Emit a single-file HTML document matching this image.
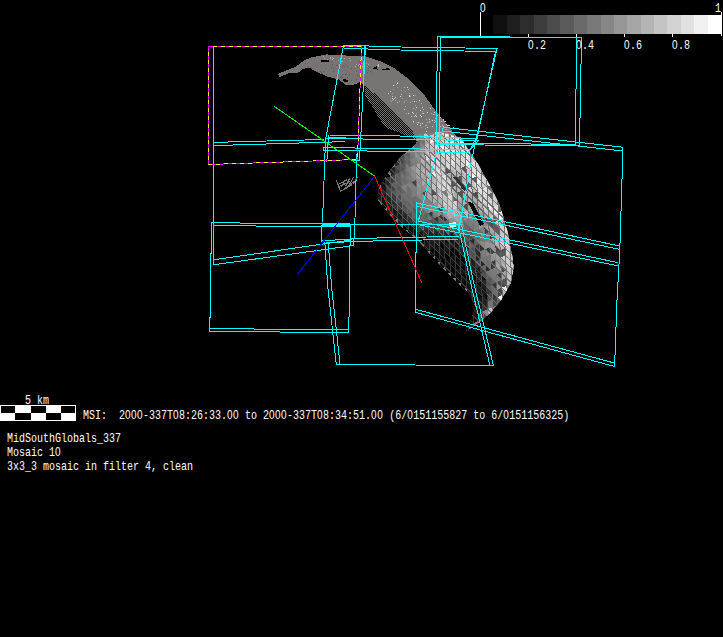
<!DOCTYPE html>
<html><head><meta charset="utf-8"><title>MSI mosaic</title>
<style>
html,body{margin:0;padding:0;background:#000;}
body{width:723px;height:637px;overflow:hidden;position:relative;}
svg{position:absolute;left:0;top:0;}
.t{position:absolute;color:#fff;font-family:"Liberation Mono",monospace;font-size:13.5px;line-height:13px;height:13px;white-space:pre;transform:scaleX(0.7407);transform-origin:0 0;}
.z{font-family:"Liberation Sans",sans-serif;letter-spacing:0.044em;line-height:0;}
</style></head><body>
<svg width="723" height="637" viewBox="0 0 723 637">
<defs>
<pattern id="dither" width="2" height="2" patternUnits="userSpaceOnUse"><rect x="0" y="0" width="1" height="1" fill="#787474"/><rect x="1" y="1" width="1" height="1" fill="#787474"/></pattern>
<clipPath id="arcclip"><polygon points="277.6,74 286,70.5 295,67 304.6,60.2 311,57.5 318.4,56 326.7,54.4 339,55.2 353,55.8 365,56 380,61.2 395,68.7 410,80 425,96 435,110 445,122.4 456,136 467,150 455,160 440,165 425,165 410,157 420,150 419,136 416,136 409.5,127.6 398.4,116.5 390,108.2 377.7,95.7 370,90 365,86 360,82.3 353,85 346,85 339,79.6 328,76.8 318.4,72.7 308.7,67.5 303,69 297,73.5 290.7,72.5 279.7,77"/></clipPath>
<clipPath id="bodyclip"><polygon points="417.4,142.5 414,135 440,132 462,138 467.3,148 477.3,162.5 489.8,185 499.8,205 507.3,230 512.3,254.8 514,268 510.6,284 501.7,299.6 490.6,313 480,322 470,329 464,334 468,326 473,314 475,306 468.5,293 457.4,283 447.4,273 432.4,257 417.4,240 402.4,228 387.5,212.4 377.5,200 378.7,187.4 390,170 400,157.5"/></clipPath>
</defs>
<g shape-rendering="crispEdges">
<polygon points="277.6,74 286,70.5 295,67 304.6,60.2 311,57.5 318.4,56 326.7,54.4 339,55.2 353,55.8 365,56 380,61.2 395,68.7 410,80 425,96 435,110 445,122.4 456,136 467,150 455,160 440,165 425,165 410,157 420,150 419,136 416,136 409.5,127.6 398.4,116.5 390,108.2 377.7,95.7 370,90 365,86 360,82.3 353,85 346,85 339,79.6 328,76.8 318.4,72.7 308.7,67.5 303,69 297,73.5 290.7,72.5 279.7,77" fill="#787474"/>
<polygon points="365,86 365,95.7 373.5,108.2 377.7,116.5 386,127.6 400,133 411,137 415,140 420,150 419,136 416,136 409.5,127.6 398.4,116.5 390,108.2 377.7,95.7 370,90" fill="url(#dither)"/>
<polygon points="321,60 329,60 329,62 321,62" fill="#000"/>
<polygon points="343,79 348,80 348,82 344,82" fill="#000"/>
<polygon points="372,69 377,66 377.5,69.5" fill="#000"/>
<polygon points="382,69.5 389,67.5 390,70" fill="#000"/>
<polygon points="376,66 379,64 379,67" fill="#b8b8b8"/>
<g clip-path="url(#arcclip)"><rect x="333" y="58" width="1" height="1" fill="#a8a8a8"/><rect x="332" y="57" width="1" height="1" fill="#a8a8a8"/><rect x="332" y="57" width="1" height="1" fill="#a8a8a8"/><rect x="324" y="58" width="1" height="1" fill="#a8a8a8"/><rect x="332" y="59" width="1" height="1" fill="#a8a8a8"/><rect x="323" y="56" width="1" height="1" fill="#a8a8a8"/><rect x="330" y="57" width="1" height="1" fill="#a8a8a8"/><rect x="327" y="59" width="1" height="1" fill="#a8a8a8"/><rect x="330" y="58" width="1" height="1" fill="#a8a8a8"/><rect x="332" y="57" width="1" height="1" fill="#a8a8a8"/><rect x="362" y="66" width="1" height="1" fill="#a8a8a8"/><rect x="359" y="64" width="1" height="1" fill="#a8a8a8"/><rect x="366" y="63" width="1" height="1" fill="#a8a8a8"/><rect x="356" y="64" width="1" height="1" fill="#a8a8a8"/><rect x="367" y="66" width="1" height="1" fill="#a8a8a8"/><rect x="360" y="63" width="1" height="1" fill="#a8a8a8"/><rect x="359" y="65" width="1" height="1" fill="#a8a8a8"/><rect x="361" y="63" width="1" height="1" fill="#a8a8a8"/><rect x="368" y="64" width="1" height="1" fill="#a8a8a8"/><rect x="355" y="66" width="1" height="1" fill="#a8a8a8"/><rect x="363" y="65" width="1" height="1" fill="#a8a8a8"/><rect x="358" y="65" width="1" height="1" fill="#a8a8a8"/><rect x="350" y="60" width="1" height="1" fill="#a8a8a8"/><rect x="342" y="61" width="1" height="1" fill="#a8a8a8"/><rect x="344" y="58" width="1" height="1" fill="#a8a8a8"/><rect x="341" y="61" width="1" height="1" fill="#a8a8a8"/><rect x="349" y="58" width="1" height="1" fill="#a8a8a8"/><rect x="338" y="60" width="1" height="1" fill="#a8a8a8"/><rect x="337" y="65" width="1" height="1" fill="#5a5858"/><rect x="343" y="65" width="1" height="1" fill="#5a5858"/><rect x="336" y="65" width="1" height="1" fill="#5a5858"/><rect x="311" y="68" width="1" height="1" fill="#5a5858"/><rect x="336" y="75" width="1" height="1" fill="#5a5858"/><rect x="342" y="74" width="1" height="1" fill="#5a5858"/><rect x="308" y="66" width="1" height="1" fill="#5a5858"/><rect x="325" y="68" width="1" height="1" fill="#5a5858"/><rect x="334" y="78" width="1" height="1" fill="#5a5858"/><rect x="310" y="67" width="1" height="1" fill="#5a5858"/><rect x="312" y="70" width="1" height="1" fill="#5a5858"/><rect x="323" y="71" width="1" height="1" fill="#5a5858"/><rect x="301" y="76" width="1" height="1" fill="#5a5858"/><rect x="326" y="74" width="1" height="1" fill="#5a5858"/><rect x="320" y="71" width="1" height="1" fill="#5a5858"/><rect x="340" y="77" width="1" height="1" fill="#5a5858"/><rect x="333" y="71" width="1" height="1" fill="#5a5858"/><rect x="342" y="77" width="1" height="1" fill="#5a5858"/><rect x="301" y="68" width="1" height="1" fill="#5a5858"/><rect x="340" y="62" width="1" height="1" fill="#5a5858"/><rect x="306" y="69" width="1" height="1" fill="#5a5858"/><rect x="331" y="67" width="1" height="1" fill="#5a5858"/><rect x="333" y="76" width="1" height="1" fill="#5a5858"/><rect x="312" y="68" width="1" height="1" fill="#5a5858"/><rect x="333" y="68" width="1" height="1" fill="#5a5858"/><rect x="302" y="78" width="1" height="1" fill="#5a5858"/><rect x="341" y="76" width="1" height="1" fill="#5a5858"/><rect x="307" y="71" width="1" height="1" fill="#5a5858"/><rect x="342" y="66" width="1" height="1" fill="#5a5858"/><rect x="308" y="76" width="1" height="1" fill="#5a5858"/><rect x="305" y="63" width="1" height="1" fill="#5a5858"/><rect x="301" y="73" width="1" height="1" fill="#5a5858"/><rect x="339" y="69" width="1" height="1" fill="#5a5858"/><rect x="332" y="64" width="1" height="1" fill="#5a5858"/><rect x="331" y="62" width="1" height="1" fill="#5a5858"/><rect x="321" y="72" width="1" height="1" fill="#5a5858"/><rect x="321" y="73" width="1" height="1" fill="#5a5858"/><rect x="344" y="66" width="1" height="1" fill="#5a5858"/><rect x="305" y="63" width="1" height="1" fill="#5a5858"/><rect x="345" y="64" width="1" height="1" fill="#5a5858"/><rect x="368" y="70" width="1" height="1" fill="#5a5858"/><rect x="370" y="66" width="1" height="1" fill="#5a5858"/><rect x="347" y="66" width="1" height="1" fill="#5a5858"/><rect x="358" y="82" width="1" height="1" fill="#5a5858"/><rect x="369" y="67" width="1" height="1" fill="#5a5858"/><rect x="360" y="70" width="1" height="1" fill="#5a5858"/><rect x="348" y="85" width="1" height="1" fill="#5a5858"/><rect x="346" y="73" width="1" height="1" fill="#5a5858"/><rect x="347" y="66" width="1" height="1" fill="#5a5858"/><rect x="367" y="65" width="1" height="1" fill="#5a5858"/><rect x="357" y="75" width="1" height="1" fill="#5a5858"/><rect x="360" y="82" width="1" height="1" fill="#5a5858"/><rect x="347" y="77" width="1" height="1" fill="#5a5858"/><rect x="372" y="73" width="1" height="1" fill="#5a5858"/><rect x="351" y="80" width="1" height="1" fill="#5a5858"/><rect x="360" y="69" width="1" height="1" fill="#5a5858"/><rect x="345" y="74" width="1" height="1" fill="#5a5858"/><rect x="359" y="84" width="1" height="1" fill="#5a5858"/><rect x="367" y="72" width="1" height="1" fill="#5a5858"/><rect x="359" y="65" width="1" height="1" fill="#5a5858"/><rect x="359" y="61" width="1" height="1" fill="#5a5858"/><rect x="368" y="68" width="1" height="1" fill="#5a5858"/><rect x="356" y="71" width="1" height="1" fill="#5a5858"/><rect x="359" y="76" width="1" height="1" fill="#5a5858"/><rect x="356" y="79" width="1" height="1" fill="#5a5858"/><rect x="357" y="67" width="1" height="1" fill="#5a5858"/><rect x="345" y="85" width="1" height="1" fill="#5a5858"/><rect x="351" y="68" width="1" height="1" fill="#5a5858"/><rect x="370" y="71" width="1" height="1" fill="#5a5858"/><rect x="349" y="74" width="1" height="1" fill="#5a5858"/></g>
<rect x="404" y="101" width="1" height="1" fill="#a0a0a0"/><rect x="444" y="133" width="1" height="1" fill="#b0b0b0"/><rect x="420" y="125" width="1" height="1" fill="#dcdcdc"/><rect x="409" y="96" width="1" height="1" fill="#dcdcdc"/><rect x="421" y="116" width="1" height="1" fill="#dcdcdc"/><rect x="433" y="114" width="1" height="1" fill="#c8c8c8"/><rect x="441" y="132" width="1" height="1" fill="#b0b0b0"/><rect x="436" y="114" width="1" height="1" fill="#b0b0b0"/><rect x="415" y="95" width="1" height="1" fill="#a0a0a0"/><rect x="415" y="115" width="1" height="1" fill="#dcdcdc"/><rect x="426" y="131" width="1" height="1" fill="#dcdcdc"/><rect x="432" y="126" width="1" height="1" fill="#c8c8c8"/><rect x="447" y="125" width="1" height="1" fill="#c8c8c8"/><rect x="423" y="109" width="1" height="1" fill="#dcdcdc"/><rect x="431" y="133" width="1" height="1" fill="#dcdcdc"/><rect x="422" y="111" width="1" height="1" fill="#a0a0a0"/><rect x="423" y="113" width="1" height="1" fill="#c8c8c8"/><rect x="441" y="136" width="1" height="1" fill="#b0b0b0"/><rect x="434" y="139" width="1" height="1" fill="#c8c8c8"/><rect x="434" y="120" width="1" height="1" fill="#b0b0b0"/><rect x="436" y="119" width="1" height="1" fill="#a0a0a0"/><rect x="413" y="95" width="1" height="1" fill="#dcdcdc"/><rect x="392" y="98" width="1" height="1" fill="#dcdcdc"/><rect x="449" y="125" width="1" height="1" fill="#dcdcdc"/><rect x="430" y="133" width="1" height="1" fill="#b0b0b0"/><rect x="422" y="123" width="1" height="1" fill="#dcdcdc"/><rect x="435" y="121" width="1" height="1" fill="#a0a0a0"/><rect x="413" y="122" width="1" height="1" fill="#a0a0a0"/><rect x="397" y="82" width="1" height="1" fill="#b0b0b0"/><rect x="439" y="143" width="1" height="1" fill="#a0a0a0"/><rect x="431" y="113" width="1" height="1" fill="#b0b0b0"/><rect x="450" y="134" width="1" height="1" fill="#a0a0a0"/><rect x="441" y="143" width="1" height="1" fill="#dcdcdc"/><rect x="408" y="113" width="1" height="1" fill="#dcdcdc"/><rect x="427" y="122" width="1" height="1" fill="#b0b0b0"/><rect x="421" y="127" width="1" height="1" fill="#a0a0a0"/><rect x="413" y="113" width="1" height="1" fill="#c8c8c8"/><rect x="446" y="134" width="1" height="1" fill="#a0a0a0"/><rect x="420" y="115" width="1" height="1" fill="#b0b0b0"/><rect x="430" y="136" width="1" height="1" fill="#a0a0a0"/><rect x="390" y="91" width="1" height="1" fill="#c8c8c8"/><rect x="392" y="93" width="1" height="1" fill="#dcdcdc"/><rect x="406" y="113" width="1" height="1" fill="#a0a0a0"/><rect x="440" y="117" width="1" height="1" fill="#b0b0b0"/><rect x="453" y="127" width="1" height="1" fill="#a0a0a0"/><rect x="406" y="100" width="1" height="1" fill="#a0a0a0"/><rect x="405" y="91" width="1" height="1" fill="#a0a0a0"/><rect x="443" y="126" width="1" height="1" fill="#dcdcdc"/><rect x="393" y="99" width="1" height="1" fill="#c8c8c8"/><rect x="413" y="99" width="1" height="1" fill="#a0a0a0"/><rect x="409" y="95" width="1" height="1" fill="#dcdcdc"/><rect x="434" y="114" width="1" height="1" fill="#a0a0a0"/><rect x="443" y="138" width="1" height="1" fill="#c8c8c8"/><rect x="411" y="116" width="1" height="1" fill="#c8c8c8"/><rect x="392" y="96" width="1" height="1" fill="#c8c8c8"/><rect x="443" y="131" width="1" height="1" fill="#c8c8c8"/><rect x="443" y="119" width="1" height="1" fill="#c8c8c8"/><rect x="404" y="109" width="1" height="1" fill="#c8c8c8"/><rect x="443" y="128" width="1" height="1" fill="#b0b0b0"/><rect x="440" y="126" width="1" height="1" fill="#c8c8c8"/><rect x="415" y="109" width="1" height="1" fill="#a0a0a0"/><rect x="416" y="113" width="1" height="1" fill="#a0a0a0"/><rect x="416" y="107" width="1" height="1" fill="#dcdcdc"/><rect x="407" y="87" width="1" height="1" fill="#dcdcdc"/><rect x="417" y="124" width="1" height="1" fill="#c8c8c8"/><rect x="393" y="89" width="1" height="1" fill="#a0a0a0"/><rect x="417" y="122" width="1" height="1" fill="#b0b0b0"/><rect x="434" y="139" width="1" height="1" fill="#b0b0b0"/><rect x="444" y="121" width="1" height="1" fill="#c8c8c8"/><rect x="437" y="140" width="1" height="1" fill="#b0b0b0"/><rect x="388" y="93" width="1" height="1" fill="#c8c8c8"/><rect x="423" y="109" width="1" height="1" fill="#b0b0b0"/><rect x="422" y="113" width="1" height="1" fill="#b0b0b0"/><rect x="414" y="101" width="1" height="1" fill="#dcdcdc"/><rect x="444" y="121" width="1" height="1" fill="#c8c8c8"/><rect x="402" y="98" width="1" height="1" fill="#b0b0b0"/><rect x="397" y="102" width="1" height="1" fill="#c8c8c8"/><rect x="445" y="121" width="1" height="1" fill="#dcdcdc"/><rect x="397" y="87" width="1" height="1" fill="#a0a0a0"/><rect x="426" y="119" width="1" height="1" fill="#b0b0b0"/><rect x="414" y="116" width="1" height="1" fill="#b0b0b0"/><rect x="437" y="136" width="1" height="1" fill="#b0b0b0"/><rect x="404" y="87" width="1" height="1" fill="#b0b0b0"/><rect x="446" y="124" width="1" height="1" fill="#dcdcdc"/><rect x="412" y="101" width="1" height="1" fill="#a0a0a0"/><rect x="415" y="105" width="1" height="1" fill="#a0a0a0"/><rect x="416" y="101" width="1" height="1" fill="#a0a0a0"/><rect x="421" y="103" width="1" height="1" fill="#b0b0b0"/><rect x="434" y="122" width="1" height="1" fill="#b0b0b0"/><rect x="430" y="108" width="1" height="1" fill="#dcdcdc"/><rect x="422" y="123" width="1" height="1" fill="#dcdcdc"/><rect x="434" y="112" width="1" height="1" fill="#dcdcdc"/><rect x="392" y="93" width="1" height="1" fill="#a0a0a0"/><rect x="412" y="112" width="1" height="1" fill="#dcdcdc"/><rect x="396" y="84" width="1" height="1" fill="#a0a0a0"/><rect x="437" y="115" width="1" height="1" fill="#dcdcdc"/><rect x="409" y="93" width="1" height="1" fill="#b0b0b0"/><rect x="447" y="133" width="1" height="1" fill="#a0a0a0"/><rect x="395" y="97" width="1" height="1" fill="#dcdcdc"/><rect x="426" y="125" width="1" height="1" fill="#b0b0b0"/><rect x="435" y="132" width="1" height="1" fill="#dcdcdc"/><rect x="395" y="100" width="1" height="1" fill="#b0b0b0"/><rect x="420" y="115" width="1" height="1" fill="#dcdcdc"/><rect x="408" y="89" width="1" height="1" fill="#b0b0b0"/><rect x="397" y="83" width="1" height="1" fill="#dcdcdc"/><rect x="433" y="138" width="1" height="1" fill="#a0a0a0"/><rect x="443" y="120" width="1" height="1" fill="#c8c8c8"/><rect x="394" y="98" width="1" height="1" fill="#b0b0b0"/><rect x="418" y="122" width="1" height="1" fill="#c8c8c8"/><rect x="442" y="125" width="1" height="1" fill="#c8c8c8"/><rect x="429" y="119" width="1" height="1" fill="#dcdcdc"/><rect x="404" y="102" width="1" height="1" fill="#a0a0a0"/><rect x="417" y="124" width="1" height="1" fill="#dcdcdc"/><rect x="413" y="121" width="1" height="1" fill="#dcdcdc"/><rect x="433" y="138" width="1" height="1" fill="#dcdcdc"/><rect x="427" y="127" width="1" height="1" fill="#dcdcdc"/><rect x="401" y="94" width="1" height="1" fill="#c8c8c8"/><rect x="400" y="96" width="1" height="1" fill="#dcdcdc"/><rect x="444" y="134" width="1" height="1" fill="#dcdcdc"/><rect x="420" y="123" width="1" height="1" fill="#c8c8c8"/><rect x="410" y="96" width="1" height="1" fill="#a0a0a0"/><rect x="440" y="141" width="1" height="1" fill="#a0a0a0"/><rect x="425" y="128" width="1" height="1" fill="#a0a0a0"/><rect x="445" y="129" width="1" height="1" fill="#a0a0a0"/><rect x="420" y="110" width="1" height="1" fill="#c8c8c8"/><rect x="427" y="112" width="1" height="1" fill="#dcdcdc"/><rect x="441" y="121" width="1" height="1" fill="#dcdcdc"/><rect x="435" y="118" width="1" height="1" fill="#b0b0b0"/><rect x="416" y="116" width="1" height="1" fill="#dcdcdc"/><rect x="431" y="134" width="1" height="1" fill="#b0b0b0"/><rect x="422" y="107" width="1" height="1" fill="#c8c8c8"/><rect x="425" y="125" width="1" height="1" fill="#b0b0b0"/><rect x="442" y="142" width="1" height="1" fill="#c8c8c8"/><rect x="439" y="137" width="1" height="1" fill="#c8c8c8"/><rect x="399" y="101" width="1" height="1" fill="#b0b0b0"/><rect x="446" y="129" width="1" height="1" fill="#b0b0b0"/><rect x="410" y="102" width="1" height="1" fill="#b0b0b0"/><rect x="401" y="90" width="1" height="1" fill="#a0a0a0"/><rect x="393" y="89" width="1" height="1" fill="#a0a0a0"/><rect x="393" y="85" width="1" height="1" fill="#dcdcdc"/><rect x="419" y="100" width="1" height="1" fill="#dcdcdc"/><rect x="413" y="108" width="1" height="1" fill="#b0b0b0"/><rect x="448" y="125" width="1" height="1" fill="#dcdcdc"/><rect x="392" y="100" width="1" height="1" fill="#a0a0a0"/><rect x="390" y="100" width="1" height="1" fill="#a0a0a0"/><rect x="432" y="120" width="1" height="1" fill="#dcdcdc"/><rect x="405" y="106" width="1" height="1" fill="#a0a0a0"/><rect x="391" y="101" width="1" height="1" fill="#a0a0a0"/><rect x="429" y="122" width="1" height="1" fill="#b0b0b0"/><rect x="429" y="121" width="1" height="1" fill="#b0b0b0"/>
<g clip-path="url(#bodyclip)" stroke-width="1">
<polygon points="417.4,142.5 414,135 440,132 462,138 467.3,148 477.3,162.5 489.8,185 499.8,205 507.3,230 512.3,254.8 514,268 510.6,284 501.7,299.6 490.6,313 480,322 470,329 464,334 468,326 473,314 475,306 468.5,293 457.4,283 447.4,273 432.4,257 417.4,240 402.4,228 387.5,212.4 377.5,200 378.7,187.4 390,170 400,157.5" fill="#808080"/>
<polygon points="413.9,135.2 419.2,140.5 418.9,133.0" fill="#7e7e7e"/><polygon points="418.9,133.0 419.2,140.5 424.2,138.3" fill="#8c8c8c"/><polygon points="423.8,130.8 424.2,138.3 429.1,136.1" fill="#c8c8c8"/><polygon points="409.4,144.8 409.7,152.3 414.7,150.2" fill="#4f4f4f"/><polygon points="414.3,142.7 414.7,150.2 419.6,148.0" fill="#626262"/><polygon points="414.3,142.7 419.6,148.0 419.2,140.5" fill="#5d5d5d"/><polygon points="419.2,140.5 419.6,148.0 424.5,145.8" fill="#828282"/><polygon points="419.2,140.5 424.5,145.8 424.2,138.3" fill="#717171"/><polygon points="424.2,138.3 424.5,145.8 429.5,143.6" fill="#a6a6a6"/><polygon points="424.2,138.3 429.5,143.6 429.1,136.1" fill="#a3a3a3"/><polygon points="429.1,136.1 429.5,143.6 434.4,141.4" fill="#f0f0f0"/><polygon points="429.1,136.1 434.4,141.4 434.1,133.9" fill="#c9c9c9"/><polygon points="434.1,133.9 434.4,141.4 439.4,139.2" fill="#e4e4e4"/><polygon points="434.1,133.9 439.4,139.2 439.0,131.8" fill="#c5c5c5"/><polygon points="439.0,131.8 439.4,139.2 444.3,137.1" fill="#c4c4c4"/><polygon points="439.0,131.8 444.3,137.1 444.0,129.6" fill="#d5d5d5"/><polygon points="444.0,129.6 444.3,137.1 449.2,134.9" fill="#f7f7f7"/><polygon points="394.9,158.9 395.3,166.4 400.2,164.2" fill="#2a2a2a"/><polygon points="394.9,158.9 400.2,164.2 399.8,156.7" fill="#434343"/><polygon points="399.8,156.7 400.2,164.2 405.1,162.0" fill="#454545"/><polygon points="399.8,156.7 405.1,162.0 404.8,154.5" fill="#4d4d4d"/><polygon points="404.8,154.5 405.1,162.0 410.1,159.8" fill="#6b6b6b"/><polygon points="404.8,154.5 410.1,159.8 409.7,152.3" fill="#5d5d5d"/><polygon points="409.7,152.3 410.1,159.8 415.0,157.7" fill="#737373"/><polygon points="409.7,152.3 415.0,157.7 414.7,150.2" fill="#7c7c7c"/><polygon points="414.7,150.2 415.0,157.7 420.0,155.5" fill="#949494"/><polygon points="414.7,150.2 420.0,155.5 419.6,148.0" fill="#878787"/><polygon points="419.6,148.0 420.0,155.5 424.9,153.3" fill="#909090"/><polygon points="419.6,148.0 424.9,153.3 424.5,145.8" fill="#929292"/><polygon points="424.5,145.8 424.9,153.3 429.8,151.1" fill="#b7b7b7"/><polygon points="424.5,145.8 429.8,151.1 429.5,143.6" fill="#bfbfbf"/><polygon points="429.5,143.6 429.8,151.1 434.8,148.9" fill="#c4c4c4"/><polygon points="429.5,143.6 434.8,148.9 434.4,141.4" fill="#c5c5c5"/><polygon points="434.4,141.4 434.8,148.9 439.7,146.7" fill="#d3d3d3"/><polygon points="434.4,141.4 439.7,146.7 439.4,139.2" fill="#cacaca"/><polygon points="439.4,139.2 439.7,146.7 444.7,144.6" fill="#c0c0c0"/><polygon points="439.4,139.2 444.7,144.6 444.3,137.1" fill="#d3d3d3"/><polygon points="444.3,137.1 444.7,144.6 449.6,142.4" fill="#dadada"/><polygon points="444.3,137.1 449.6,142.4 449.2,134.9" fill="#cecece"/><polygon points="449.2,134.9 449.6,142.4 454.5,140.2" fill="#c4c4c4"/><polygon points="449.2,134.9 454.5,140.2 454.2,132.7" fill="#f3f3f3"/><polygon points="454.2,132.7 454.5,140.2 459.5,138.0" fill="#c9c9c9"/><polygon points="385.4,170.7 385.7,178.2 390.7,176.1" fill="#050505"/><polygon points="390.3,168.6 390.7,176.1 395.6,173.9" fill="#1f1f1f"/><polygon points="390.3,168.6 395.6,173.9 395.3,166.4" fill="#1e1e1e"/><polygon points="395.3,166.4 395.6,173.9 400.6,171.7" fill="#424242"/><polygon points="395.3,166.4 400.6,171.7 400.2,164.2" fill="#4e4e4e"/><polygon points="400.2,164.2 400.6,171.7 405.5,169.5" fill="#525252"/><polygon points="400.2,164.2 405.5,169.5 405.1,162.0" fill="#585858"/><polygon points="405.1,162.0 405.5,169.5 410.4,167.3" fill="#797979"/><polygon points="405.1,162.0 410.4,167.3 410.1,159.8" fill="#646464"/><polygon points="410.1,159.8 410.4,167.3 415.4,165.1" fill="#757575"/><polygon points="410.1,159.8 415.4,165.1 415.0,157.7" fill="#828282"/><polygon points="415.0,157.7 415.4,165.1 420.3,163.0" fill="#818181"/><polygon points="415.0,157.7 420.3,163.0 420.0,155.5" fill="#8f8f8f"/><polygon points="420.0,155.5 420.3,163.0 425.3,160.8" fill="#b2b2b2"/><polygon points="420.0,155.5 425.3,160.8 424.9,153.3" fill="#a7a7a7"/><polygon points="424.9,153.3 425.3,160.8 430.2,158.6" fill="#e0e0e0"/><polygon points="424.9,153.3 430.2,158.6 429.8,151.1" fill="#c3c3c3"/><polygon points="429.8,151.1 430.2,158.6 435.1,156.4" fill="#cfcfcf"/><polygon points="429.8,151.1 435.1,156.4 434.8,148.9" fill="#c1c1c1"/><polygon points="434.8,148.9 435.1,156.4 440.1,154.2" fill="#c0c0c0"/><polygon points="434.8,148.9 440.1,154.2 439.7,146.7" fill="#e4e4e4"/><polygon points="439.7,146.7 440.1,154.2 445.0,152.1" fill="#c6c6c6"/><polygon points="439.7,146.7 445.0,152.1 444.7,144.6" fill="#f2f2f2"/><polygon points="444.7,144.6 445.0,152.1 450.0,149.9" fill="#e9e9e9"/><polygon points="444.7,144.6 450.0,149.9 449.6,142.4" fill="#c5c5c5"/><polygon points="449.6,142.4 450.0,149.9 454.9,147.7" fill="#c5c5c5"/><polygon points="449.6,142.4 454.9,147.7 454.5,140.2" fill="#f7f7f7"/><polygon points="454.5,140.2 454.9,147.7 459.8,145.5" fill="#cfcfcf"/><polygon points="454.5,140.2 459.8,145.5 459.5,138.0" fill="#f7f7f7"/><polygon points="459.5,138.0 459.8,145.5 464.8,143.3" fill="#e4e4e4"/><polygon points="380.8,180.4 381.1,187.9 386.1,185.7" fill="#141414"/><polygon points="380.8,180.4 386.1,185.7 385.7,178.2" fill="#060606"/><polygon points="385.7,178.2 386.1,185.7 391.0,183.6" fill="#232323"/><polygon points="385.7,178.2 391.0,183.6 390.7,176.1" fill="#2f2f2f"/><polygon points="390.7,176.1 391.0,183.6 396.0,181.4" fill="#363636"/><polygon points="390.7,176.1 396.0,181.4 395.6,173.9" fill="#444444"/><polygon points="395.6,173.9 396.0,181.4 400.9,179.2" fill="#5a5a5a"/><polygon points="395.6,173.9 400.9,179.2 400.6,171.7" fill="#595959"/><polygon points="400.6,171.7 400.9,179.2 405.9,177.0" fill="#747474"/><polygon points="400.6,171.7 405.9,177.0 405.5,169.5" fill="#626262"/><polygon points="405.5,169.5 405.9,177.0 410.8,174.8" fill="#707070"/><polygon points="405.5,169.5 410.8,174.8 410.4,167.3" fill="#7c7c7c"/><polygon points="410.4,167.3 410.8,174.8 415.7,172.6" fill="#868686"/><polygon points="410.4,167.3 415.7,172.6 415.4,165.1" fill="#969696"/><polygon points="415.4,165.1 415.7,172.6 420.7,170.5" fill="#a7a7a7"/><polygon points="415.4,165.1 420.7,170.5 420.3,163.0" fill="#a8a8a8"/><polygon points="420.3,163.0 420.7,170.5 425.6,168.3" fill="#a5a5a5"/><polygon points="420.3,163.0 425.6,168.3 425.3,160.8" fill="#acacac"/><polygon points="425.3,160.8 425.6,168.3 430.6,166.1" fill="#acacac"/><polygon points="425.3,160.8 430.6,166.1 430.2,158.6" fill="#b6b6b6"/><polygon points="430.2,158.6 430.6,166.1 435.5,163.9" fill="#d5d5d5"/><polygon points="430.2,158.6 435.5,163.9 435.1,156.4" fill="#d7d7d7"/><polygon points="435.1,156.4 435.5,163.9 440.4,161.7" fill="#dbdbdb"/><polygon points="435.1,156.4 440.4,161.7 440.1,154.2" fill="#c5c5c5"/><polygon points="440.1,154.2 440.4,161.7 445.4,159.6" fill="#c6c6c6"/><polygon points="440.1,154.2 445.4,159.6 445.0,152.1" fill="#d4d4d4"/><polygon points="445.0,152.1 445.4,159.6 450.3,157.4" fill="#dcdcdc"/><polygon points="445.0,152.1 450.3,157.4 450.0,149.9" fill="#d7d7d7"/><polygon points="450.0,149.9 450.3,157.4 455.3,155.2" fill="#c7c7c7"/><polygon points="450.0,149.9 455.3,155.2 454.9,147.7" fill="#e1e1e1"/><polygon points="454.9,147.7 455.3,155.2 460.2,153.0" fill="#dedede"/><polygon points="454.9,147.7 460.2,153.0 459.8,145.5" fill="#cdcdcd"/><polygon points="459.8,145.5 460.2,153.0 465.1,150.8" fill="#d3d3d3"/><polygon points="459.8,145.5 465.1,150.8 464.8,143.3" fill="#e8e8e8"/><polygon points="464.8,143.3 465.1,150.8 470.1,148.6" fill="#d8d8d8"/><polygon points="376.2,190.1 376.6,197.6 381.5,195.4" fill="#131313"/><polygon points="376.2,190.1 381.5,195.4 381.1,187.9" fill="#050505"/><polygon points="381.1,187.9 381.5,195.4 386.4,193.2" fill="#282828"/><polygon points="381.1,187.9 386.4,193.2 386.1,185.7" fill="#151515"/><polygon points="386.1,185.7 386.4,193.2 391.4,191.0" fill="#3f3f3f"/><polygon points="386.1,185.7 391.4,191.0 391.0,183.6" fill="#333333"/><polygon points="391.0,183.6 391.4,191.0 396.3,188.9" fill="#404040"/><polygon points="391.0,183.6 396.3,188.9 396.0,181.4" fill="#5f5f5f"/><polygon points="396.0,181.4 396.3,188.9 401.3,186.7" fill="#5c5c5c"/><polygon points="396.0,181.4 401.3,186.7 400.9,179.2" fill="#5f5f5f"/><polygon points="400.9,179.2 401.3,186.7 406.2,184.5" fill="#757575"/><polygon points="400.9,179.2 406.2,184.5 405.9,177.0" fill="#696969"/><polygon points="405.9,177.0 406.2,184.5 411.2,182.3" fill="#737373"/><polygon points="405.9,177.0 411.2,182.3 410.8,174.8" fill="#797979"/><polygon points="410.8,174.8 411.2,182.3 416.1,180.1" fill="#7f7f7f"/><polygon points="410.8,174.8 416.1,180.1 415.7,172.6" fill="#8c8c8c"/><polygon points="415.7,172.6 416.1,180.1 421.0,178.0" fill="#9d9d9d"/><polygon points="415.7,172.6 421.0,178.0 420.7,170.5" fill="#9f9f9f"/><polygon points="420.7,170.5 421.0,178.0 426.0,175.8" fill="#ababab"/><polygon points="420.7,170.5 426.0,175.8 425.6,168.3" fill="#b3b3b3"/><polygon points="425.6,168.3 426.0,175.8 430.9,173.6" fill="#b7b7b7"/><polygon points="425.6,168.3 430.9,173.6 430.6,166.1" fill="#aeaeae"/><polygon points="430.6,166.1 430.9,173.6 435.9,171.4" fill="#bababa"/><polygon points="430.6,166.1 435.9,171.4 435.5,163.9" fill="#d0d0d0"/><polygon points="435.5,163.9 435.9,171.4 440.8,169.2" fill="#c7c7c7"/><polygon points="435.5,163.9 440.8,169.2 440.4,161.7" fill="#cfcfcf"/><polygon points="440.4,161.7 440.8,169.2 445.7,167.0" fill="#c2c2c2"/><polygon points="440.4,161.7 445.7,167.0 445.4,159.6" fill="#c8c8c8"/><polygon points="445.4,159.6 445.7,167.0 450.7,164.9" fill="#d9d9d9"/><polygon points="445.4,159.6 450.7,164.9 450.3,157.4" fill="#d3d3d3"/><polygon points="450.3,157.4 450.7,164.9 455.6,162.7" fill="#dfdfdf"/><polygon points="450.3,157.4 455.6,162.7 455.3,155.2" fill="#d7d7d7"/><polygon points="455.3,155.2 455.6,162.7 460.6,160.5" fill="#d5d5d5"/><polygon points="455.3,155.2 460.6,160.5 460.2,153.0" fill="#d4d4d4"/><polygon points="460.2,153.0 460.6,160.5 465.5,158.3" fill="#d6d6d6"/><polygon points="460.2,153.0 465.5,158.3 465.1,150.8" fill="#dedede"/><polygon points="465.1,150.8 465.5,158.3 470.4,156.1" fill="#e7e7e7"/><polygon points="465.1,150.8 470.4,156.1 470.1,148.6" fill="#dcdcdc"/><polygon points="376.6,197.6 381.9,202.9 381.5,195.4" fill="#1d1d1d"/><polygon points="381.5,195.4 381.9,202.9 386.8,200.7" fill="#0e0e0e"/><polygon points="381.5,195.4 386.8,200.7 386.4,193.2" fill="#151515"/><polygon points="386.4,193.2 386.8,200.7 391.7,198.5" fill="#1f1f1f"/><polygon points="386.4,193.2 391.7,198.5 391.4,191.0" fill="#444444"/><polygon points="391.4,191.0 391.7,198.5 396.7,196.4" fill="#3c3c3c"/><polygon points="391.4,191.0 396.7,196.4 396.3,188.9" fill="#565656"/><polygon points="396.3,188.9 396.7,196.4 401.6,194.2" fill="#646464"/><polygon points="396.3,188.9 401.6,194.2 401.3,186.7" fill="#585858"/><polygon points="401.3,186.7 401.6,194.2 406.6,192.0" fill="#646464"/><polygon points="401.3,186.7 406.6,192.0 406.2,184.5" fill="#7f7f7f"/><polygon points="406.2,184.5 406.6,192.0 411.5,189.8" fill="#6c6c6c"/><polygon points="406.2,184.5 411.5,189.8 411.2,182.3" fill="#808080"/><polygon points="411.2,182.3 411.5,189.8 416.4,187.6" fill="#7d7d7d"/><polygon points="411.2,182.3 416.4,187.6 416.1,180.1" fill="#434343"/><polygon points="416.1,180.1 416.4,187.6 421.4,185.5" fill="#979797"/><polygon points="416.1,180.1 421.4,185.5 421.0,178.0" fill="#8f8f8f"/><polygon points="421.0,178.0 421.4,185.5 426.3,183.3" fill="#a9a9a9"/><polygon points="421.0,178.0 426.3,183.3 426.0,175.8" fill="#a0a0a0"/><polygon points="426.0,175.8 426.3,183.3 431.3,181.1" fill="#bdbdbd"/><polygon points="426.0,175.8 431.3,181.1 430.9,173.6" fill="#aeaeae"/><polygon points="430.9,173.6 431.3,181.1 436.2,178.9" fill="#b1b1b1"/><polygon points="430.9,173.6 436.2,178.9 435.9,171.4" fill="#e4e4e4"/><polygon points="435.9,171.4 436.2,178.9 441.2,176.7" fill="#c7c7c7"/><polygon points="435.9,171.4 441.2,176.7 440.8,169.2" fill="#d6d6d6"/><polygon points="440.8,169.2 441.2,176.7 446.1,174.5" fill="#c2c2c2"/><polygon points="440.8,169.2 446.1,174.5 445.7,167.0" fill="#d1d1d1"/><polygon points="445.7,167.0 446.1,174.5 451.0,172.4" fill="#575757"/><polygon points="445.7,167.0 451.0,172.4 450.7,164.9" fill="#d6d6d6"/><polygon points="450.7,164.9 451.0,172.4 456.0,170.2" fill="#c4c4c4"/><polygon points="450.7,164.9 456.0,170.2 455.6,162.7" fill="#d7d7d7"/><polygon points="455.6,162.7 456.0,170.2 460.9,168.0" fill="#c7c7c7"/><polygon points="455.6,162.7 460.9,168.0 460.6,160.5" fill="#c7c7c7"/><polygon points="460.6,160.5 460.9,168.0 465.9,165.8" fill="#d4d4d4"/><polygon points="460.6,160.5 465.9,165.8 465.5,158.3" fill="#d8d8d8"/><polygon points="465.5,158.3 465.9,165.8 470.8,163.6" fill="#f7f7f7"/><polygon points="465.5,158.3 470.8,163.6 470.4,156.1" fill="#dadada"/><polygon points="470.4,156.1 470.8,163.6 475.7,161.5" fill="#cecece"/><polygon points="381.9,202.9 382.2,210.4 387.2,208.2" fill="#050505"/><polygon points="381.9,202.9 387.2,208.2 386.8,200.7" fill="#101010"/><polygon points="386.8,200.7 387.2,208.2 392.1,206.0" fill="#242424"/><polygon points="386.8,200.7 392.1,206.0 391.7,198.5" fill="#262626"/><polygon points="391.7,198.5 392.1,206.0 397.0,203.9" fill="#2c2c2c"/><polygon points="391.7,198.5 397.0,203.9 396.7,196.4" fill="#393939"/><polygon points="396.7,196.4 397.0,203.9 402.0,201.7" fill="#525252"/><polygon points="396.7,196.4 402.0,201.7 401.6,194.2" fill="#4b4b4b"/><polygon points="401.6,194.2 402.0,201.7 406.9,199.5" fill="#686868"/><polygon points="401.6,194.2 406.9,199.5 406.6,192.0" fill="#6e6e6e"/><polygon points="406.6,192.0 406.9,199.5 411.9,197.3" fill="#6a6a6a"/><polygon points="406.6,192.0 411.9,197.3 411.5,189.8" fill="#707070"/><polygon points="411.5,189.8 411.9,197.3 416.8,195.1" fill="#7f7f7f"/><polygon points="411.5,189.8 416.8,195.1 416.4,187.6" fill="#7e7e7e"/><polygon points="416.4,187.6 416.8,195.1 421.7,192.9" fill="#8f8f8f"/><polygon points="416.4,187.6 421.7,192.9 421.4,185.5" fill="#8f8f8f"/><polygon points="421.4,185.5 421.7,192.9 426.7,190.8" fill="#8b8b8b"/><polygon points="421.4,185.5 426.7,190.8 426.3,183.3" fill="#959595"/><polygon points="426.3,183.3 426.7,190.8 431.6,188.6" fill="#a1a1a1"/><polygon points="426.3,183.3 431.6,188.6 431.3,181.1" fill="#a5a5a5"/><polygon points="431.3,181.1 431.6,188.6 436.6,186.4" fill="#c2c2c2"/><polygon points="431.3,181.1 436.6,186.4 436.2,178.9" fill="#b6b6b6"/><polygon points="436.2,178.9 436.6,186.4 441.5,184.2" fill="#bbbbbb"/><polygon points="436.2,178.9 441.5,184.2 441.2,176.7" fill="#bdbdbd"/><polygon points="441.2,176.7 441.5,184.2 446.5,182.0" fill="#c4c4c4"/><polygon points="441.2,176.7 446.5,182.0 446.1,174.5" fill="#dbdbdb"/><polygon points="446.1,174.5 446.5,182.0 451.4,179.9" fill="#c6c6c6"/><polygon points="446.1,174.5 451.4,179.9 451.0,172.4" fill="#c9c9c9"/><polygon points="451.0,172.4 451.4,179.9 456.3,177.7" fill="#c1c1c1"/><polygon points="451.0,172.4 456.3,177.7 456.0,170.2" fill="#d0d0d0"/><polygon points="456.0,170.2 456.3,177.7 461.3,175.5" fill="#c9c9c9"/><polygon points="456.0,170.2 461.3,175.5 460.9,168.0" fill="#c4c4c4"/><polygon points="460.9,168.0 461.3,175.5 466.2,173.3" fill="#c7c7c7"/><polygon points="460.9,168.0 466.2,173.3 465.9,165.8" fill="#595959"/><polygon points="465.9,165.8 466.2,173.3 471.2,171.1" fill="#d0d0d0"/><polygon points="465.9,165.8 471.2,171.1 470.8,163.6" fill="#dadada"/><polygon points="470.8,163.6 471.2,171.1 476.1,169.0" fill="#e0e0e0"/><polygon points="470.8,163.6 476.1,169.0 475.7,161.5" fill="#e0e0e0"/><polygon points="475.7,161.5 476.1,169.0 481.0,166.8" fill="#d7d7d7"/><polygon points="387.2,208.2 387.5,215.7 392.5,213.5" fill="#1e1e1e"/><polygon points="387.2,208.2 392.5,213.5 392.1,206.0" fill="#1f1f1f"/><polygon points="392.1,206.0 392.5,213.5 397.4,211.4" fill="#101010"/><polygon points="392.1,206.0 397.4,211.4 397.0,203.9" fill="#373737"/><polygon points="397.0,203.9 397.4,211.4 402.3,209.2" fill="#3c3c3c"/><polygon points="397.0,203.9 402.3,209.2 402.0,201.7" fill="#3a3a3a"/><polygon points="402.0,201.7 402.3,209.2 407.3,207.0" fill="#4e4e4e"/><polygon points="402.0,201.7 407.3,207.0 406.9,199.5" fill="#616161"/><polygon points="406.9,199.5 407.3,207.0 412.2,204.8" fill="#606060"/><polygon points="406.9,199.5 412.2,204.8 411.9,197.3" fill="#6d6d6d"/><polygon points="411.9,197.3 412.2,204.8 417.2,202.6" fill="#656565"/><polygon points="411.9,197.3 417.2,202.6 416.8,195.1" fill="#6c6c6c"/><polygon points="416.8,195.1 417.2,202.6 422.1,200.4" fill="#717171"/><polygon points="416.8,195.1 422.1,200.4 421.7,192.9" fill="#888888"/><polygon points="421.7,192.9 422.1,200.4 427.0,198.3" fill="#909090"/><polygon points="421.7,192.9 427.0,198.3 426.7,190.8" fill="#434343"/><polygon points="426.7,190.8 427.0,198.3 432.0,196.1" fill="#a6a6a6"/><polygon points="426.7,190.8 432.0,196.1 431.6,188.6" fill="#a6a6a6"/><polygon points="431.6,188.6 432.0,196.1 436.9,193.9" fill="#505050"/><polygon points="431.6,188.6 436.9,193.9 436.6,186.4" fill="#bcbcbc"/><polygon points="436.6,186.4 436.9,193.9 441.9,191.7" fill="#acacac"/><polygon points="436.6,186.4 441.9,191.7 441.5,184.2" fill="#c7c7c7"/><polygon points="441.5,184.2 441.9,191.7 446.8,189.5" fill="#cccccc"/><polygon points="441.5,184.2 446.8,189.5 446.5,182.0" fill="#cbcbcb"/><polygon points="446.5,182.0 446.8,189.5 451.8,187.4" fill="#cccccc"/><polygon points="446.5,182.0 451.8,187.4 451.4,179.9" fill="#d6d6d6"/><polygon points="451.4,179.9 451.8,187.4 456.7,185.2" fill="#5f5f5f"/><polygon points="451.4,179.9 456.7,185.2 456.3,177.7" fill="#c5c5c5"/><polygon points="456.3,177.7 456.7,185.2 461.6,183.0" fill="#d8d8d8"/><polygon points="456.3,177.7 461.6,183.0 461.3,175.5" fill="#5f5f5f"/><polygon points="461.3,175.5 461.6,183.0 466.6,180.8" fill="#c5c5c5"/><polygon points="461.3,175.5 466.6,180.8 466.2,173.3" fill="#d9d9d9"/><polygon points="466.2,173.3 466.6,180.8 471.5,178.6" fill="#dadada"/><polygon points="466.2,173.3 471.5,178.6 471.2,171.1" fill="#d6d6d6"/><polygon points="471.2,171.1 471.5,178.6 476.5,176.4" fill="#f7f7f7"/><polygon points="471.2,171.1 476.5,176.4 476.1,169.0" fill="#e4e4e4"/><polygon points="476.1,169.0 476.5,176.4 481.4,174.3" fill="#e8e8e8"/><polygon points="476.1,169.0 481.4,174.3 481.0,166.8" fill="#cbcbcb"/><polygon points="392.5,213.5 392.8,221.0 397.8,218.8" fill="#1a1a1a"/><polygon points="392.5,213.5 397.8,218.8 397.4,211.4" fill="#181818"/><polygon points="397.4,211.4 397.8,218.8 402.7,216.7" fill="#161616"/><polygon points="397.4,211.4 402.7,216.7 402.3,209.2" fill="#252525"/><polygon points="402.3,209.2 402.7,216.7 407.6,214.5" fill="#2c2c2c"/><polygon points="402.3,209.2 407.6,214.5 407.3,207.0" fill="#565656"/><polygon points="407.3,207.0 407.6,214.5 412.6,212.3" fill="#595959"/><polygon points="407.3,207.0 412.6,212.3 412.2,204.8" fill="#666666"/><polygon points="412.2,204.8 412.6,212.3 417.5,210.1" fill="#575757"/><polygon points="412.2,204.8 417.5,210.1 417.2,202.6" fill="#696969"/><polygon points="417.2,202.6 417.5,210.1 422.5,207.9" fill="#606060"/><polygon points="417.2,202.6 422.5,207.9 422.1,200.4" fill="#787878"/><polygon points="422.1,200.4 422.5,207.9 427.4,205.8" fill="#747474"/><polygon points="422.1,200.4 427.4,205.8 427.0,198.3" fill="#838383"/><polygon points="427.0,198.3 427.4,205.8 432.3,203.6" fill="#808080"/><polygon points="427.0,198.3 432.3,203.6 432.0,196.1" fill="#a3a3a3"/><polygon points="432.0,196.1 432.3,203.6 437.3,201.4" fill="#acacac"/><polygon points="432.0,196.1 437.3,201.4 436.9,193.9" fill="#b6b6b6"/><polygon points="436.9,193.9 437.3,201.4 442.2,199.2" fill="#acacac"/><polygon points="436.9,193.9 442.2,199.2 441.9,191.7" fill="#c6c6c6"/><polygon points="441.9,191.7 442.2,199.2 447.2,197.0" fill="#b8b8b8"/><polygon points="441.9,191.7 447.2,197.0 446.8,189.5" fill="#545454"/><polygon points="446.8,189.5 447.2,197.0 452.1,194.9" fill="#bbbbbb"/><polygon points="446.8,189.5 452.1,194.9 451.8,187.4" fill="#c5c5c5"/><polygon points="451.8,187.4 452.1,194.9 457.0,192.7" fill="#c5c5c5"/><polygon points="451.8,187.4 457.0,192.7 456.7,185.2" fill="#cecece"/><polygon points="456.7,185.2 457.0,192.7 462.0,190.5" fill="#cbcbcb"/><polygon points="456.7,185.2 462.0,190.5 461.6,183.0" fill="#dcdcdc"/><polygon points="461.6,183.0 462.0,190.5 466.9,188.3" fill="#d5d5d5"/><polygon points="461.6,183.0 466.9,188.3 466.6,180.8" fill="#e0e0e0"/><polygon points="466.6,180.8 466.9,188.3 471.9,186.1" fill="#626262"/><polygon points="466.6,180.8 471.9,186.1 471.5,178.6" fill="#dcdcdc"/><polygon points="471.5,178.6 471.9,186.1 476.8,183.9" fill="#dddddd"/><polygon points="471.5,178.6 476.8,183.9 476.5,176.4" fill="#5d5d5d"/><polygon points="476.5,176.4 476.8,183.9 481.8,181.8" fill="#f7f7f7"/><polygon points="476.5,176.4 481.8,181.8 481.4,174.3" fill="#d8d8d8"/><polygon points="481.4,174.3 481.8,181.8 486.7,179.6" fill="#d4d4d4"/><polygon points="397.8,218.8 398.1,226.3 403.1,224.2" fill="#1f1f1f"/><polygon points="397.8,218.8 403.1,224.2 402.7,216.7" fill="#1f1f1f"/><polygon points="402.7,216.7 403.1,224.2 408.0,222.0" fill="#222222"/><polygon points="402.7,216.7 408.0,222.0 407.6,214.5" fill="#252525"/><polygon points="407.6,214.5 408.0,222.0 412.9,219.8" fill="#303030"/><polygon points="407.6,214.5 412.9,219.8 412.6,212.3" fill="#4b4b4b"/><polygon points="412.6,212.3 412.9,219.8 417.9,217.6" fill="#5e5e5e"/><polygon points="412.6,212.3 417.9,217.6 417.5,210.1" fill="#5a5a5a"/><polygon points="417.5,210.1 417.9,217.6 422.8,215.4" fill="#585858"/><polygon points="417.5,210.1 422.8,215.4 422.5,207.9" fill="#676767"/><polygon points="422.5,207.9 422.8,215.4 427.8,213.3" fill="#6a6a6a"/><polygon points="422.5,207.9 427.8,213.3 427.4,205.8" fill="#7e7e7e"/><polygon points="427.4,205.8 427.8,213.3 432.7,211.1" fill="#898989"/><polygon points="427.4,205.8 432.7,211.1 432.3,203.6" fill="#898989"/><polygon points="432.3,203.6 432.7,211.1 437.6,208.9" fill="#8e8e8e"/><polygon points="432.3,203.6 437.6,208.9 437.3,201.4" fill="#8f8f8f"/><polygon points="437.3,201.4 437.6,208.9 442.6,206.7" fill="#b1b1b1"/><polygon points="437.3,201.4 442.6,206.7 442.2,199.2" fill="#adadad"/><polygon points="442.2,199.2 442.6,206.7 447.5,204.5" fill="#bebebe"/><polygon points="442.2,199.2 447.5,204.5 447.2,197.0" fill="#b3b3b3"/><polygon points="447.2,197.0 447.5,204.5 452.5,202.3" fill="#bbbbbb"/><polygon points="447.2,197.0 452.5,202.3 452.1,194.9" fill="#d3d3d3"/><polygon points="452.1,194.9 452.5,202.3 457.4,200.2" fill="#606060"/><polygon points="452.1,194.9 457.4,200.2 457.0,192.7" fill="#bebebe"/><polygon points="457.0,192.7 457.4,200.2 462.3,198.0" fill="#d9d9d9"/><polygon points="457.0,192.7 462.3,198.0 462.0,190.5" fill="#5e5e5e"/><polygon points="462.0,190.5 462.3,198.0 467.3,195.8" fill="#cccccc"/><polygon points="462.0,190.5 467.3,195.8 466.9,188.3" fill="#dbdbdb"/><polygon points="466.9,188.3 467.3,195.8 472.2,193.6" fill="#e0e0e0"/><polygon points="466.9,188.3 472.2,193.6 471.9,186.1" fill="#efefef"/><polygon points="471.9,186.1 472.2,193.6 477.2,191.4" fill="#d5d5d5"/><polygon points="471.9,186.1 477.2,191.4 476.8,183.9" fill="#e3e3e3"/><polygon points="476.8,183.9 477.2,191.4 482.1,189.3" fill="#dbdbdb"/><polygon points="476.8,183.9 482.1,189.3 481.8,181.8" fill="#d6d6d6"/><polygon points="481.8,181.8 482.1,189.3 487.1,187.1" fill="#cacaca"/><polygon points="481.8,181.8 487.1,187.1 486.7,179.6" fill="#d1d1d1"/><polygon points="486.7,179.6 487.1,187.1 492.0,184.9" fill="#dfdfdf"/><polygon points="403.1,224.2 403.4,231.7 408.4,229.5" fill="#050505"/><polygon points="403.1,224.2 408.4,229.5 408.0,222.0" fill="#1e1e1e"/><polygon points="408.0,222.0 408.4,229.5 413.3,227.3" fill="#121212"/><polygon points="408.0,222.0 413.3,227.3 412.9,219.8" fill="#2f2f2f"/><polygon points="412.9,219.8 413.3,227.3 418.2,225.1" fill="#313131"/><polygon points="412.9,219.8 418.2,225.1 417.9,217.6" fill="#4c4c4c"/><polygon points="417.9,217.6 418.2,225.1 423.2,222.9" fill="#434343"/><polygon points="417.9,217.6 423.2,222.9 422.8,215.4" fill="#666666"/><polygon points="422.8,215.4 423.2,222.9 428.1,220.7" fill="#646464"/><polygon points="422.8,215.4 428.1,220.7 427.8,213.3" fill="#5f5f5f"/><polygon points="427.8,213.3 428.1,220.7 433.1,218.6" fill="#757575"/><polygon points="427.8,213.3 433.1,218.6 432.7,211.1" fill="#333333"/><polygon points="432.7,211.1 433.1,218.6 438.0,216.4" fill="#777777"/><polygon points="432.7,211.1 438.0,216.4 437.6,208.9" fill="#858585"/><polygon points="437.6,208.9 438.0,216.4 442.9,214.2" fill="#8c8c8c"/><polygon points="437.6,208.9 442.9,214.2 442.6,206.7" fill="#414141"/><polygon points="442.6,206.7 442.9,214.2 447.9,212.0" fill="#959595"/><polygon points="442.6,206.7 447.9,212.0 447.5,204.5" fill="#b0b0b0"/><polygon points="447.5,204.5 447.9,212.0 452.8,209.8" fill="#b3b3b3"/><polygon points="447.5,204.5 452.8,209.8 452.5,202.3" fill="#b7b7b7"/><polygon points="452.5,202.3 452.8,209.8 457.8,207.7" fill="#c5c5c5"/><polygon points="452.5,202.3 457.8,207.7 457.4,200.2" fill="#cdcdcd"/><polygon points="457.4,200.2 457.8,207.7 462.7,205.5" fill="#b9b9b9"/><polygon points="457.4,200.2 462.7,205.5 462.3,198.0" fill="#c2c2c2"/><polygon points="462.3,198.0 462.7,205.5 467.6,203.3" fill="#c5c5c5"/><polygon points="462.3,198.0 467.6,203.3 467.3,195.8" fill="#c3c3c3"/><polygon points="467.3,195.8 467.6,203.3 472.6,201.1" fill="#cecece"/><polygon points="467.3,195.8 472.6,201.1 472.2,193.6" fill="#c4c4c4"/><polygon points="472.2,193.6 472.6,201.1 477.5,198.9" fill="#c4c4c4"/><polygon points="472.2,193.6 477.5,198.9 477.2,191.4" fill="#595959"/><polygon points="477.2,191.4 477.5,198.9 482.5,196.8" fill="#c4c4c4"/><polygon points="477.2,191.4 482.5,196.8 482.1,189.3" fill="#e1e1e1"/><polygon points="482.1,189.3 482.5,196.8 487.4,194.6" fill="#dcdcdc"/><polygon points="482.1,189.3 487.4,194.6 487.1,187.1" fill="#e5e5e5"/><polygon points="487.1,187.1 487.4,194.6 492.4,192.4" fill="#cfcfcf"/><polygon points="487.1,187.1 492.4,192.4 492.0,184.9" fill="#656565"/><polygon points="408.4,229.5 408.7,237.0 413.7,234.8" fill="#111111"/><polygon points="408.4,229.5 413.7,234.8 413.3,227.3" fill="#111111"/><polygon points="413.3,227.3 413.7,234.8 418.6,232.6" fill="#0d0d0d"/><polygon points="413.3,227.3 418.6,232.6 418.2,225.1" fill="#1f1f1f"/><polygon points="418.2,225.1 418.6,232.6 423.5,230.4" fill="#373737"/><polygon points="418.2,225.1 423.5,230.4 423.2,222.9" fill="#4a4a4a"/><polygon points="423.2,222.9 423.5,230.4 428.5,228.2" fill="#373737"/><polygon points="423.2,222.9 428.5,228.2 428.1,220.7" fill="#535353"/><polygon points="428.1,220.7 428.5,228.2 433.4,226.1" fill="#3a3a3a"/><polygon points="428.1,220.7 433.4,226.1 433.1,218.6" fill="#525252"/><polygon points="433.1,218.6 433.4,226.1 438.4,223.9" fill="#4b4b4b"/><polygon points="433.1,218.6 438.4,223.9 438.0,216.4" fill="#323232"/><polygon points="438.0,216.4 438.4,223.9 443.3,221.7" fill="#616161"/><polygon points="438.0,216.4 443.3,221.7 442.9,214.2" fill="#383838"/><polygon points="442.9,214.2 443.3,221.7 448.2,219.5" fill="#2e2e2e"/><polygon points="442.9,214.2 448.2,219.5 447.9,212.0" fill="#969696"/><polygon points="447.9,212.0 448.2,219.5 453.2,217.3" fill="#929292"/><polygon points="447.9,212.0 453.2,217.3 452.8,209.8" fill="#979797"/><polygon points="452.8,209.8 453.2,217.3 458.1,215.2" fill="#a9a9a9"/><polygon points="452.8,209.8 458.1,215.2 457.8,207.7" fill="#a2a2a2"/><polygon points="457.8,207.7 458.1,215.2 463.1,213.0" fill="#a4a4a4"/><polygon points="457.8,207.7 463.1,213.0 462.7,205.5" fill="#a7a7a7"/><polygon points="462.7,205.5 463.1,213.0 468.0,210.8" fill="#c1c1c1"/><polygon points="462.7,205.5 468.0,210.8 467.6,203.3" fill="#5a5a5a"/><polygon points="467.6,203.3 468.0,210.8 472.9,208.6" fill="#b2b2b2"/><polygon points="467.6,203.3 472.9,208.6 472.6,201.1" fill="#cfcfcf"/><polygon points="472.6,201.1 472.9,208.6 477.9,206.4" fill="#bdbdbd"/><polygon points="472.6,201.1 477.9,206.4 477.5,198.9" fill="#c5c5c5"/><polygon points="477.5,198.9 477.9,206.4 482.8,204.2" fill="#d5d5d5"/><polygon points="477.5,198.9 482.8,204.2 482.5,196.8" fill="#d7d7d7"/><polygon points="482.5,196.8 482.8,204.2 487.8,202.1" fill="#d9d9d9"/><polygon points="482.5,196.8 487.8,202.1 487.4,194.6" fill="#d6d6d6"/><polygon points="487.4,194.6 487.8,202.1 492.7,199.9" fill="#cecece"/><polygon points="487.4,194.6 492.7,199.9 492.4,192.4" fill="#656565"/><polygon points="492.4,192.4 492.7,199.9 497.7,197.7" fill="#d0d0d0"/><polygon points="413.7,234.8 419.0,240.1 418.6,232.6" fill="#090909"/><polygon points="418.6,232.6 419.0,240.1 423.9,237.9" fill="#050505"/><polygon points="418.6,232.6 423.9,237.9 423.5,230.4" fill="#181818"/><polygon points="423.5,230.4 423.9,237.9 428.8,235.7" fill="#2b2b2b"/><polygon points="423.5,230.4 428.8,235.7 428.5,228.2" fill="#272727"/><polygon points="428.5,228.2 428.8,235.7 433.8,233.6" fill="#222222"/><polygon points="428.5,228.2 433.8,233.6 433.4,226.1" fill="#404040"/><polygon points="433.4,226.1 433.8,233.6 438.7,231.4" fill="#303030"/><polygon points="433.4,226.1 438.7,231.4 438.4,223.9" fill="#484848"/><polygon points="438.4,223.9 438.7,231.4 443.7,229.2" fill="#4a4a4a"/><polygon points="438.4,223.9 443.7,229.2 443.3,221.7" fill="#575757"/><polygon points="443.3,221.7 443.7,229.2 448.6,227.0" fill="#5b5b5b"/><polygon points="443.3,221.7 448.6,227.0 448.2,219.5" fill="#636363"/><polygon points="448.2,219.5 448.6,227.0 453.5,224.8" fill="#696969"/><polygon points="448.2,219.5 453.5,224.8 453.2,217.3" fill="#717171"/><polygon points="453.2,217.3 453.5,224.8 458.5,222.7" fill="#717171"/><polygon points="453.2,217.3 458.5,222.7 458.1,215.2" fill="#8f8f8f"/><polygon points="458.1,215.2 458.5,222.7 463.4,220.5" fill="#8a8a8a"/><polygon points="458.1,215.2 463.4,220.5 463.1,213.0" fill="#9d9d9d"/><polygon points="463.1,213.0 463.4,220.5 468.4,218.3" fill="#a7a7a7"/><polygon points="463.1,213.0 468.4,218.3 468.0,210.8" fill="#dddddd"/><polygon points="468.0,210.8 468.4,218.3 473.3,216.1" fill="#a7a7a7"/><polygon points="468.0,210.8 473.3,216.1 472.9,208.6" fill="#bbbbbb"/><polygon points="472.9,208.6 473.3,216.1 478.2,213.9" fill="#a1a1a1"/><polygon points="472.9,208.6 478.2,213.9 477.9,206.4" fill="#adadad"/><polygon points="477.9,206.4 478.2,213.9 483.2,211.7" fill="#c8c8c8"/><polygon points="477.9,206.4 483.2,211.7 482.8,204.2" fill="#cfcfcf"/><polygon points="482.8,204.2 483.2,211.7 488.1,209.6" fill="#d0d0d0"/><polygon points="482.8,204.2 488.1,209.6 487.8,202.1" fill="#c4c4c4"/><polygon points="487.8,202.1 488.1,209.6 493.1,207.4" fill="#f7f7f7"/><polygon points="487.8,202.1 493.1,207.4 492.7,199.9" fill="#d5d5d5"/><polygon points="492.7,199.9 493.1,207.4 498.0,205.2" fill="#cccccc"/><polygon points="492.7,199.9 498.0,205.2 497.7,197.7" fill="#cecece"/><polygon points="419.0,240.1 424.3,245.4 423.9,237.9" fill="#060606"/><polygon points="423.9,237.9 424.3,245.4 429.2,243.2" fill="#141414"/><polygon points="423.9,237.9 429.2,243.2 428.8,235.7" fill="#080808"/><polygon points="428.8,235.7 429.2,243.2 434.1,241.1" fill="#1e1e1e"/><polygon points="428.8,235.7 434.1,241.1 433.8,233.6" fill="#1e1e1e"/><polygon points="433.8,233.6 434.1,241.1 439.1,238.9" fill="#2b2b2b"/><polygon points="433.8,233.6 439.1,238.9 438.7,231.4" fill="#1e1e1e"/><polygon points="438.7,231.4 439.1,238.9 444.0,236.7" fill="#262626"/><polygon points="438.7,231.4 444.0,236.7 443.7,229.2" fill="#383838"/><polygon points="443.7,229.2 444.0,236.7 449.0,234.5" fill="#272727"/><polygon points="443.7,229.2 449.0,234.5 448.6,227.0" fill="#3d3d3d"/><polygon points="448.6,227.0 449.0,234.5 453.9,232.3" fill="#3a3a3a"/><polygon points="448.6,227.0 453.9,232.3 453.5,224.8" fill="#494949"/><polygon points="453.5,224.8 453.9,232.3 458.8,230.1" fill="#515151"/><polygon points="453.5,224.8 458.8,230.1 458.5,222.7" fill="#787878"/><polygon points="458.5,222.7 458.8,230.1 463.8,228.0" fill="#6c6c6c"/><polygon points="458.5,222.7 463.8,228.0 463.4,220.5" fill="#878787"/><polygon points="463.4,220.5 463.8,228.0 468.7,225.8" fill="#747474"/><polygon points="463.4,220.5 468.7,225.8 468.4,218.3" fill="#8f8f8f"/><polygon points="468.4,218.3 468.7,225.8 473.7,223.6" fill="#909090"/><polygon points="468.4,218.3 473.7,223.6 473.3,216.1" fill="#9c9c9c"/><polygon points="473.3,216.1 473.7,223.6 478.6,221.4" fill="#8f8f8f"/><polygon points="473.3,216.1 478.6,221.4 478.2,213.9" fill="#ababab"/><polygon points="478.2,213.9 478.6,221.4 483.5,219.2" fill="#9c9c9c"/><polygon points="478.2,213.9 483.5,219.2 483.2,211.7" fill="#afafaf"/><polygon points="483.2,211.7 483.5,219.2 488.5,217.1" fill="#adadad"/><polygon points="483.2,211.7 488.5,217.1 488.1,209.6" fill="#c1c1c1"/><polygon points="488.1,209.6 488.5,217.1 493.4,214.9" fill="#b9b9b9"/><polygon points="488.1,209.6 493.4,214.9 493.1,207.4" fill="#d4d4d4"/><polygon points="493.1,207.4 493.4,214.9 498.4,212.7" fill="#ededed"/><polygon points="493.1,207.4 498.4,212.7 498.0,205.2" fill="#e1e1e1"/><polygon points="498.0,205.2 498.4,212.7 503.3,210.5" fill="#616161"/><polygon points="424.3,245.4 424.6,252.9 429.5,250.7" fill="#151515"/><polygon points="424.3,245.4 429.5,250.7 429.2,243.2" fill="#181818"/><polygon points="429.2,243.2 429.5,250.7 434.5,248.6" fill="#161616"/><polygon points="429.2,243.2 434.5,248.6 434.1,241.1" fill="#1a1a1a"/><polygon points="434.1,241.1 434.5,248.6 439.4,246.4" fill="#0e0e0e"/><polygon points="434.1,241.1 439.4,246.4 439.1,238.9" fill="#232323"/><polygon points="439.1,238.9 439.4,246.4 444.4,244.2" fill="#0e0e0e"/><polygon points="439.1,238.9 444.4,244.2 444.0,236.7" fill="#1f1f1f"/><polygon points="444.0,236.7 444.4,244.2 449.3,242.0" fill="#0f0f0f"/><polygon points="444.0,236.7 449.3,242.0 449.0,234.5" fill="#2a2a2a"/><polygon points="449.0,234.5 449.3,242.0 454.3,239.8" fill="#141414"/><polygon points="449.0,234.5 454.3,239.8 453.9,232.3" fill="#191919"/><polygon points="453.9,232.3 454.3,239.8 459.2,237.6" fill="#3a3a3a"/><polygon points="453.9,232.3 459.2,237.6 458.8,230.1" fill="#484848"/><polygon points="458.8,230.1 459.2,237.6 464.1,235.5" fill="#535353"/><polygon points="458.8,230.1 464.1,235.5 463.8,228.0" fill="#606060"/><polygon points="463.8,228.0 464.1,235.5 469.1,233.3" fill="#646464"/><polygon points="463.8,228.0 469.1,233.3 468.7,225.8" fill="#767676"/><polygon points="468.7,225.8 469.1,233.3 474.0,231.1" fill="#6d6d6d"/><polygon points="468.7,225.8 474.0,231.1 473.7,223.6" fill="#888888"/><polygon points="473.7,223.6 474.0,231.1 479.0,228.9" fill="#929292"/><polygon points="473.7,223.6 479.0,228.9 478.6,221.4" fill="#939393"/><polygon points="478.6,221.4 479.0,228.9 483.9,226.7" fill="#b4b4b4"/><polygon points="478.6,221.4 483.9,226.7 483.5,219.2" fill="#979797"/><polygon points="483.5,219.2 483.9,226.7 488.8,224.6" fill="#9b9b9b"/><polygon points="483.5,219.2 488.8,224.6 488.5,217.1" fill="#505050"/><polygon points="488.5,217.1 488.8,224.6 493.8,222.4" fill="#555555"/><polygon points="488.5,217.1 493.8,222.4 493.4,214.9" fill="#cacaca"/><polygon points="493.4,214.9 493.8,222.4 498.7,220.2" fill="#5a5a5a"/><polygon points="493.4,214.9 498.7,220.2 498.4,212.7" fill="#cecece"/><polygon points="498.4,212.7 498.7,220.2 503.7,218.0" fill="#f7f7f7"/><polygon points="498.4,212.7 503.7,218.0 503.3,210.5" fill="#e4e4e4"/><polygon points="429.5,250.7 429.9,258.2 434.8,256.0" fill="#0f0f0f"/><polygon points="429.5,250.7 434.8,256.0 434.5,248.6" fill="#050505"/><polygon points="434.5,248.6 434.8,256.0 439.8,253.9" fill="#0a0a0a"/><polygon points="434.5,248.6 439.8,253.9 439.4,246.4" fill="#191919"/><polygon points="439.4,246.4 439.8,253.9 444.7,251.7" fill="#161616"/><polygon points="439.4,246.4 444.7,251.7 444.4,244.2" fill="#050505"/><polygon points="444.4,244.2 444.7,251.7 449.7,249.5" fill="#181818"/><polygon points="444.4,244.2 449.7,249.5 449.3,242.0" fill="#1e1e1e"/><polygon points="449.3,242.0 449.7,249.5 454.6,247.3" fill="#1c1c1c"/><polygon points="449.3,242.0 454.6,247.3 454.3,239.8" fill="#161616"/><polygon points="454.3,239.8 454.6,247.3 459.6,245.1" fill="#131313"/><polygon points="454.3,239.8 459.6,245.1 459.2,237.6" fill="#242424"/><polygon points="459.2,237.6 459.6,245.1 464.5,243.0" fill="#0d0d0d"/><polygon points="459.2,237.6 464.5,243.0 464.1,235.5" fill="#373737"/><polygon points="464.1,235.5 464.5,243.0 469.4,240.8" fill="#565656"/><polygon points="464.1,235.5 469.4,240.8 469.1,233.3" fill="#525252"/><polygon points="469.1,233.3 469.4,240.8 474.4,238.6" fill="#5b5b5b"/><polygon points="469.1,233.3 474.4,238.6 474.0,231.1" fill="#777777"/><polygon points="474.0,231.1 474.4,238.6 479.3,236.4" fill="#868686"/><polygon points="474.0,231.1 479.3,236.4 479.0,228.9" fill="#848484"/><polygon points="479.0,228.9 479.3,236.4 484.3,234.2" fill="#7d7d7d"/><polygon points="479.0,228.9 484.3,234.2 483.9,226.7" fill="#949494"/><polygon points="483.9,226.7 484.3,234.2 489.2,232.0" fill="#494949"/><polygon points="483.9,226.7 489.2,232.0 488.8,224.6" fill="#b2b2b2"/><polygon points="488.8,224.6 489.2,232.0 494.1,229.9" fill="#aaaaaa"/><polygon points="488.8,224.6 494.1,229.9 493.8,222.4" fill="#525252"/><polygon points="493.8,222.4 494.1,229.9 499.1,227.7" fill="#5a5a5a"/><polygon points="493.8,222.4 499.1,227.7 498.7,220.2" fill="#d1d1d1"/><polygon points="498.7,220.2 499.1,227.7 504.0,225.5" fill="#d2d2d2"/><polygon points="498.7,220.2 504.0,225.5 503.7,218.0" fill="#d7d7d7"/><polygon points="434.8,256.0 435.2,263.5 440.1,261.4" fill="#050505"/><polygon points="434.8,256.0 440.1,261.4 439.8,253.9" fill="#050505"/><polygon points="439.8,253.9 440.1,261.4 445.1,259.2" fill="#0e0e0e"/><polygon points="439.8,253.9 445.1,259.2 444.7,251.7" fill="#0d0d0d"/><polygon points="444.7,251.7 445.1,259.2 450.0,257.0" fill="#050505"/><polygon points="444.7,251.7 450.0,257.0 449.7,249.5" fill="#141414"/><polygon points="449.7,249.5 450.0,257.0 455.0,254.8" fill="#050505"/><polygon points="449.7,249.5 455.0,254.8 454.6,247.3" fill="#060606"/><polygon points="454.6,247.3 455.0,254.8 459.9,252.6" fill="#0b0b0b"/><polygon points="454.6,247.3 459.9,252.6 459.6,245.1" fill="#1d1d1d"/><polygon points="459.6,245.1 459.9,252.6 464.9,250.5" fill="#232323"/><polygon points="459.6,245.1 464.9,250.5 464.5,243.0" fill="#1d1d1d"/><polygon points="464.5,243.0 464.9,250.5 469.8,248.3" fill="#161616"/><polygon points="464.5,243.0 469.8,248.3 469.4,240.8" fill="#414141"/><polygon points="469.4,240.8 469.8,248.3 474.7,246.1" fill="#646464"/><polygon points="469.4,240.8 474.7,246.1 474.4,238.6" fill="#2c2c2c"/><polygon points="474.4,238.6 474.7,246.1 479.7,243.9" fill="#616161"/><polygon points="474.4,238.6 479.7,243.9 479.3,236.4" fill="#7c7c7c"/><polygon points="479.3,236.4 479.7,243.9 484.6,241.7" fill="#858585"/><polygon points="479.3,236.4 484.6,241.7 484.3,234.2" fill="#969696"/><polygon points="484.3,234.2 484.6,241.7 489.6,239.5" fill="#888888"/><polygon points="484.3,234.2 489.6,239.5 489.2,232.0" fill="#8b8b8b"/><polygon points="489.2,232.0 489.6,239.5 494.5,237.4" fill="#484848"/><polygon points="489.2,232.0 494.5,237.4 494.1,229.9" fill="#a1a1a1"/><polygon points="494.1,229.9 494.5,237.4 499.4,235.2" fill="#ababab"/><polygon points="494.1,229.9 499.4,235.2 499.1,227.7" fill="#5d5d5d"/><polygon points="499.1,227.7 499.4,235.2 504.4,233.0" fill="#c0c0c0"/><polygon points="499.1,227.7 504.4,233.0 504.0,225.5" fill="#d0d0d0"/><polygon points="504.0,225.5 504.4,233.0 509.3,230.8" fill="#e1e1e1"/><polygon points="440.1,261.4 440.5,268.9 445.4,266.7" fill="#050505"/><polygon points="440.1,261.4 445.4,266.7 445.1,259.2" fill="#050505"/><polygon points="445.1,259.2 445.4,266.7 450.4,264.5" fill="#141414"/><polygon points="445.1,259.2 450.4,264.5 450.0,257.0" fill="#050505"/><polygon points="450.0,257.0 450.4,264.5 455.3,262.3" fill="#151515"/><polygon points="450.0,257.0 455.3,262.3 455.0,254.8" fill="#171717"/><polygon points="455.0,254.8 455.3,262.3 460.3,260.1" fill="#090909"/><polygon points="455.0,254.8 460.3,260.1 459.9,252.6" fill="#0b0b0b"/><polygon points="459.9,252.6 460.3,260.1 465.2,257.9" fill="#101010"/><polygon points="459.9,252.6 465.2,257.9 464.9,250.5" fill="#242424"/><polygon points="464.9,250.5 465.2,257.9 470.1,255.8" fill="#2b2b2b"/><polygon points="464.9,250.5 470.1,255.8 469.8,248.3" fill="#363636"/><polygon points="469.8,248.3 470.1,255.8 475.1,253.6" fill="#515151"/><polygon points="469.8,248.3 475.1,253.6 474.7,246.1" fill="#505050"/><polygon points="474.7,246.1 475.1,253.6 480.0,251.4" fill="#323232"/><polygon points="474.7,246.1 480.0,251.4 479.7,243.9" fill="#373737"/><polygon points="479.7,243.9 480.0,251.4 485.0,249.2" fill="#333333"/><polygon points="479.7,243.9 485.0,249.2 484.6,241.7" fill="#888888"/><polygon points="484.6,241.7 485.0,249.2 489.9,247.0" fill="#909090"/><polygon points="484.6,241.7 489.9,247.0 489.6,239.5" fill="#9c9c9c"/><polygon points="489.6,239.5 489.9,247.0 494.9,244.9" fill="#939393"/><polygon points="489.6,239.5 494.9,244.9 494.5,237.4" fill="#aaaaaa"/><polygon points="494.5,237.4 494.9,244.9 499.8,242.7" fill="#b7b7b7"/><polygon points="494.5,237.4 499.8,242.7 499.4,235.2" fill="#bbbbbb"/><polygon points="499.4,235.2 499.8,242.7 504.7,240.5" fill="#cacaca"/><polygon points="499.4,235.2 504.7,240.5 504.4,233.0" fill="#c9c9c9"/><polygon points="504.4,233.0 504.7,240.5 509.7,238.3" fill="#d5d5d5"/><polygon points="504.4,233.0 509.7,238.3 509.3,230.8" fill="#d1d1d1"/><polygon points="445.4,266.7 445.8,274.2 450.7,272.0" fill="#050505"/><polygon points="445.4,266.7 450.7,272.0 450.4,264.5" fill="#050505"/><polygon points="450.4,264.5 450.7,272.0 455.7,269.8" fill="#050505"/><polygon points="450.4,264.5 455.7,269.8 455.3,262.3" fill="#090909"/><polygon points="455.3,262.3 455.7,269.8 460.6,267.6" fill="#050505"/><polygon points="455.3,262.3 460.6,267.6 460.3,260.1" fill="#161616"/><polygon points="460.3,260.1 460.6,267.6 465.6,265.4" fill="#181818"/><polygon points="460.3,260.1 465.6,265.4 465.2,257.9" fill="#060606"/><polygon points="465.2,257.9 465.6,265.4 470.5,263.3" fill="#151515"/><polygon points="465.2,257.9 470.5,263.3 470.1,255.8" fill="#2c2c2c"/><polygon points="470.1,255.8 470.5,263.3 475.4,261.1" fill="#1e1e1e"/><polygon points="470.1,255.8 475.4,261.1 475.1,253.6" fill="#515151"/><polygon points="475.1,253.6 475.4,261.1 480.4,258.9" fill="#202020"/><polygon points="475.1,253.6 480.4,258.9 480.0,251.4" fill="#262626"/><polygon points="480.0,251.4 480.4,258.9 485.3,256.7" fill="#787878"/><polygon points="480.0,251.4 485.3,256.7 485.0,249.2" fill="#7d7d7d"/><polygon points="485.0,249.2 485.3,256.7 490.3,254.5" fill="#858585"/><polygon points="485.0,249.2 490.3,254.5 489.9,247.0" fill="#383838"/><polygon points="489.9,247.0 490.3,254.5 495.2,252.4" fill="#454545"/><polygon points="489.9,247.0 495.2,252.4 494.9,244.9" fill="#979797"/><polygon points="494.9,244.9 495.2,252.4 500.2,250.2" fill="#454545"/><polygon points="494.9,244.9 500.2,250.2 499.8,242.7" fill="#aeaeae"/><polygon points="499.8,242.7 500.2,250.2 505.1,248.0" fill="#bcbcbc"/><polygon points="499.8,242.7 505.1,248.0 504.7,240.5" fill="#d5d5d5"/><polygon points="504.7,240.5 505.1,248.0 510.0,245.8" fill="#dadada"/><polygon points="504.7,240.5 510.0,245.8 509.7,238.3" fill="#c8c8c8"/><polygon points="450.7,272.0 451.1,279.5 456.0,277.3" fill="#060606"/><polygon points="450.7,272.0 456.0,277.3 455.7,269.8" fill="#060606"/><polygon points="455.7,269.8 456.0,277.3 461.0,275.1" fill="#0d0d0d"/><polygon points="455.7,269.8 461.0,275.1 460.6,267.6" fill="#191919"/><polygon points="460.6,267.6 461.0,275.1 465.9,272.9" fill="#191919"/><polygon points="460.6,267.6 465.9,272.9 465.6,265.4" fill="#050505"/><polygon points="465.6,265.4 465.9,272.9 470.9,270.8" fill="#1b1b1b"/><polygon points="465.6,265.4 470.9,270.8 470.5,263.3" fill="#080808"/><polygon points="470.5,263.3 470.9,270.8 475.8,268.6" fill="#1e1e1e"/><polygon points="470.5,263.3 475.8,268.6 475.4,261.1" fill="#1e1e1e"/><polygon points="475.4,261.1 475.8,268.6 480.7,266.4" fill="#363636"/><polygon points="475.4,261.1 480.7,266.4 480.4,258.9" fill="#4a4a4a"/><polygon points="480.4,258.9 480.7,266.4 485.7,264.2" fill="#272727"/><polygon points="480.4,258.9 485.7,264.2 485.3,256.7" fill="#737373"/><polygon points="485.3,256.7 485.7,264.2 490.6,262.0" fill="#6c6c6c"/><polygon points="485.3,256.7 490.6,262.0 490.3,254.5" fill="#747474"/><polygon points="490.3,254.5 490.6,262.0 495.6,259.9" fill="#909090"/><polygon points="490.3,254.5 495.6,259.9 495.2,252.4" fill="#979797"/><polygon points="495.2,252.4 495.6,259.9 500.5,257.7" fill="#9d9d9d"/><polygon points="495.2,252.4 500.5,257.7 500.2,250.2" fill="#525252"/><polygon points="500.2,250.2 500.5,257.7 505.5,255.5" fill="#595959"/><polygon points="500.2,250.2 505.5,255.5 505.1,248.0" fill="#535353"/><polygon points="505.1,248.0 505.5,255.5 510.4,253.3" fill="#d7d7d7"/><polygon points="505.1,248.0 510.4,253.3 510.0,245.8" fill="#cecece"/><polygon points="456.0,277.3 456.4,284.8 461.3,282.6" fill="#050505"/><polygon points="456.0,277.3 461.3,282.6 461.0,275.1" fill="#0c0c0c"/><polygon points="461.0,275.1 461.3,282.6 466.3,280.4" fill="#141414"/><polygon points="461.0,275.1 466.3,280.4 465.9,272.9" fill="#0a0a0a"/><polygon points="465.9,272.9 466.3,280.4 471.2,278.3" fill="#050505"/><polygon points="465.9,272.9 471.2,278.3 470.9,270.8" fill="#171717"/><polygon points="470.9,270.8 471.2,278.3 476.2,276.1" fill="#090909"/><polygon points="470.9,270.8 476.2,276.1 475.8,268.6" fill="#242424"/><polygon points="475.8,268.6 476.2,276.1 481.1,273.9" fill="#181818"/><polygon points="475.8,268.6 481.1,273.9 480.7,266.4" fill="#1d1d1d"/><polygon points="480.7,266.4 481.1,273.9 486.0,271.7" fill="#434343"/><polygon points="480.7,266.4 486.0,271.7 485.7,264.2" fill="#636363"/><polygon points="485.7,264.2 486.0,271.7 491.0,269.5" fill="#2b2b2b"/><polygon points="485.7,264.2 491.0,269.5 490.6,262.0" fill="#707070"/><polygon points="490.6,262.0 491.0,269.5 495.9,267.3" fill="#3a3a3a"/><polygon points="490.6,262.0 495.9,267.3 495.6,259.9" fill="#3c3c3c"/><polygon points="495.6,259.9 495.9,267.3 500.9,265.2" fill="#a4a4a4"/><polygon points="495.6,259.9 500.9,265.2 500.5,257.7" fill="#959595"/><polygon points="500.5,257.7 500.9,265.2 505.8,263.0" fill="#a5a5a5"/><polygon points="500.5,257.7 505.8,263.0 505.5,255.5" fill="#cbcbcb"/><polygon points="505.5,255.5 505.8,263.0 510.7,260.8" fill="#cecece"/><polygon points="505.5,255.5 510.7,260.8 510.4,253.3" fill="#c5c5c5"/><polygon points="510.4,253.3 510.7,260.8 515.7,258.6" fill="#cdcdcd"/><polygon points="461.3,282.6 461.7,290.1 466.6,287.9" fill="#050505"/><polygon points="461.3,282.6 466.6,287.9 466.3,280.4" fill="#080808"/><polygon points="466.3,280.4 466.6,287.9 471.6,285.8" fill="#121212"/><polygon points="466.3,280.4 471.6,285.8 471.2,278.3" fill="#131313"/><polygon points="471.2,278.3 471.6,285.8 476.5,283.6" fill="#050505"/><polygon points="471.2,278.3 476.5,283.6 476.2,276.1" fill="#101010"/><polygon points="476.2,276.1 476.5,283.6 481.5,281.4" fill="#222222"/><polygon points="476.2,276.1 481.5,281.4 481.1,273.9" fill="#232323"/><polygon points="481.1,273.9 481.5,281.4 486.4,279.2" fill="#111111"/><polygon points="481.1,273.9 486.4,279.2 486.0,271.7" fill="#505050"/><polygon points="486.0,271.7 486.4,279.2 491.3,277.0" fill="#616161"/><polygon points="486.0,271.7 491.3,277.0 491.0,269.5" fill="#757575"/><polygon points="491.0,269.5 491.3,277.0 496.3,274.8" fill="#7c7c7c"/><polygon points="491.0,269.5 496.3,274.8 495.9,267.3" fill="#7c7c7c"/><polygon points="495.9,267.3 496.3,274.8 501.2,272.7" fill="#818181"/><polygon points="495.9,267.3 501.2,272.7 500.9,265.2" fill="#a0a0a0"/><polygon points="500.9,265.2 501.2,272.7 506.2,270.5" fill="#4d4d4d"/><polygon points="500.9,265.2 506.2,270.5 505.8,263.0" fill="#b3b3b3"/><polygon points="505.8,263.0 506.2,270.5 511.1,268.3" fill="#c6c6c6"/><polygon points="505.8,263.0 511.1,268.3 510.7,260.8" fill="#d0d0d0"/><polygon points="510.7,260.8 511.1,268.3 516.0,266.1" fill="#cdcdcd"/><polygon points="466.6,287.9 467.0,295.4 471.9,293.2" fill="#101010"/><polygon points="466.6,287.9 471.9,293.2 471.6,285.8" fill="#0a0a0a"/><polygon points="471.6,285.8 471.9,293.2 476.9,291.1" fill="#050505"/><polygon points="471.6,285.8 476.9,291.1 476.5,283.6" fill="#050505"/><polygon points="476.5,283.6 476.9,291.1 481.8,288.9" fill="#1e1e1e"/><polygon points="476.5,283.6 481.8,288.9 481.5,281.4" fill="#070707"/><polygon points="481.5,281.4 481.8,288.9 486.8,286.7" fill="#1d1d1d"/><polygon points="481.5,281.4 486.8,286.7 486.4,279.2" fill="#272727"/><polygon points="486.4,279.2 486.8,286.7 491.7,284.5" fill="#4f4f4f"/><polygon points="486.4,279.2 491.7,284.5 491.3,277.0" fill="#565656"/><polygon points="491.3,277.0 491.7,284.5 496.6,282.3" fill="#646464"/><polygon points="491.3,277.0 496.6,282.3 496.3,274.8" fill="#767676"/><polygon points="496.3,274.8 496.6,282.3 501.6,280.2" fill="#7c7c7c"/><polygon points="496.3,274.8 501.6,280.2 501.2,272.7" fill="#3e3e3e"/><polygon points="501.2,272.7 501.6,280.2 506.5,278.0" fill="#9e9e9e"/><polygon points="501.2,272.7 506.5,278.0 506.2,270.5" fill="#a0a0a0"/><polygon points="506.2,270.5 506.5,278.0 511.5,275.8" fill="#c1c1c1"/><polygon points="506.2,270.5 511.5,275.8 511.1,268.3" fill="#c4c4c4"/><polygon points="511.1,268.3 511.5,275.8 516.4,273.6" fill="#d1d1d1"/><polygon points="467.0,295.4 472.3,300.7 471.9,293.2" fill="#151515"/><polygon points="471.9,293.2 472.3,300.7 477.2,298.6" fill="#050505"/><polygon points="471.9,293.2 477.2,298.6 476.9,291.1" fill="#090909"/><polygon points="476.9,291.1 477.2,298.6 482.2,296.4" fill="#050505"/><polygon points="476.9,291.1 482.2,296.4 481.8,288.9" fill="#1b1b1b"/><polygon points="481.8,288.9 482.2,296.4 487.1,294.2" fill="#141414"/><polygon points="481.8,288.9 487.1,294.2 486.8,286.7" fill="#171717"/><polygon points="486.8,286.7 487.1,294.2 492.1,292.0" fill="#353535"/><polygon points="486.8,286.7 492.1,292.0 491.7,284.5" fill="#5b5b5b"/><polygon points="491.7,284.5 492.1,292.0 497.0,289.8" fill="#6b6b6b"/><polygon points="491.7,284.5 497.0,289.8 496.6,282.3" fill="#363636"/><polygon points="496.6,282.3 497.0,289.8 501.9,287.7" fill="#949494"/><polygon points="496.6,282.3 501.9,287.7 501.6,280.2" fill="#464646"/><polygon points="501.6,280.2 501.9,287.7 506.9,285.5" fill="#4c4c4c"/><polygon points="501.6,280.2 506.9,285.5 506.5,278.0" fill="#505050"/><polygon points="506.5,278.0 506.9,285.5 511.8,283.3" fill="#bcbcbc"/><polygon points="506.5,278.0 511.8,283.3 511.5,275.8" fill="#c9c9c9"/><polygon points="472.3,300.7 477.6,306.1 477.2,298.6" fill="#050505"/><polygon points="477.2,298.6 477.6,306.1 482.5,303.9" fill="#0b0b0b"/><polygon points="477.2,298.6 482.5,303.9 482.2,296.4" fill="#151515"/><polygon points="482.2,296.4 482.5,303.9 487.5,301.7" fill="#212121"/><polygon points="482.2,296.4 487.5,301.7 487.1,294.2" fill="#0e0e0e"/><polygon points="487.1,294.2 487.5,301.7 492.4,299.5" fill="#4e4e4e"/><polygon points="487.1,294.2 492.4,299.5 492.1,292.0" fill="#474747"/><polygon points="492.1,292.0 492.4,299.5 497.4,297.3" fill="#373737"/><polygon points="492.1,292.0 497.4,297.3 497.0,289.8" fill="#6e6e6e"/><polygon points="497.0,289.8 497.4,297.3 502.3,295.1" fill="#484848"/><polygon points="497.0,289.8 502.3,295.1 501.9,287.7" fill="#414141"/><polygon points="501.9,287.7 502.3,295.1 507.2,293.0" fill="#bdbdbd"/><polygon points="501.9,287.7 507.2,293.0 506.9,285.5" fill="#e7e7e7"/><polygon points="472.7,308.2 473.0,315.7 478.0,313.6" fill="#151515"/><polygon points="472.7,308.2 478.0,313.6 477.6,306.1" fill="#050505"/><polygon points="477.6,306.1 478.0,313.6 482.9,311.4" fill="#141414"/><polygon points="477.6,306.1 482.9,311.4 482.5,303.9" fill="#161616"/><polygon points="482.5,303.9 482.9,311.4 487.8,309.2" fill="#303030"/><polygon points="482.5,303.9 487.8,309.2 487.5,301.7" fill="#212121"/><polygon points="487.5,301.7 487.8,309.2 492.8,307.0" fill="#747474"/><polygon points="487.5,301.7 492.8,307.0 492.4,299.5" fill="#707070"/><polygon points="492.4,299.5 492.8,307.0 497.7,304.8" fill="#484848"/><polygon points="492.4,299.5 497.7,304.8 497.4,297.3" fill="#414141"/><polygon points="497.4,297.3 497.7,304.8 502.7,302.6" fill="#5c5c5c"/><polygon points="497.4,297.3 502.7,302.6 502.3,295.1" fill="#f0f0f0"/><polygon points="468.1,317.9 468.4,325.4 473.4,323.2" fill="#070707"/><polygon points="468.1,317.9 473.4,323.2 473.0,315.7" fill="#090909"/><polygon points="473.0,315.7 473.4,323.2 478.3,321.0" fill="#050505"/><polygon points="473.0,315.7 478.3,321.0 478.0,313.6" fill="#101010"/><polygon points="478.0,313.6 478.3,321.0 483.2,318.9" fill="#555555"/><polygon points="478.0,313.6 483.2,318.9 482.9,311.4" fill="#3c3c3c"/><polygon points="482.9,311.4 483.2,318.9 488.2,316.7" fill="#474747"/><polygon points="482.9,311.4 488.2,316.7 487.8,309.2" fill="#898989"/><polygon points="487.8,309.2 488.2,316.7 493.1,314.5" fill="#c0c0c0"/><polygon points="487.8,309.2 493.1,314.5 492.8,307.0" fill="#c5c5c5"/><polygon points="463.5,327.6 463.8,335.1 468.8,332.9" fill="#050505"/><polygon points="463.5,327.6 468.8,332.9 468.4,325.4" fill="#070707"/><polygon points="468.4,325.4 473.7,330.7 473.4,323.2" fill="#242424"/><g fill="none" stroke-width="1"><polyline points="413.9,135.2 419.2,140.5 418.9,133.0" stroke="#7b7b7b"/><polyline points="414.3,142.7 419.6,148.0 419.2,140.5" stroke="#666666"/><polyline points="419.2,140.5 424.5,145.8 424.2,138.3" stroke="#737373"/><polyline points="424.2,138.3 429.5,143.6 429.1,136.1" stroke="#707070"/><polyline points="429.1,136.1 434.4,141.4 434.1,133.9" stroke="#707070"/><polyline points="434.1,133.9 439.4,139.2 439.0,131.8" stroke="#707070"/><polyline points="439.0,131.8 444.3,137.1 444.0,129.6" stroke="#707070"/><polyline points="394.9,158.9 400.2,164.2 399.8,156.7" stroke="#6d6d6d"/><polyline points="399.8,156.7 405.1,162.0 404.8,154.5" stroke="#5c5c5c"/><polyline points="404.8,154.5 410.1,159.8 409.7,152.3" stroke="#666666"/><polyline points="409.7,152.3 415.0,157.7 414.7,150.2" stroke="#7a7a7a"/><polyline points="414.7,150.2 420.0,155.5 419.6,148.0" stroke="#818181"/><polyline points="419.6,148.0 424.9,153.3 424.5,145.8" stroke="#888888"/><polyline points="424.5,145.8 429.8,151.1 429.5,143.6" stroke="#707070"/><polyline points="429.5,143.6 434.8,148.9 434.4,141.4" stroke="#707070"/><polyline points="434.4,141.4 439.7,146.7 439.4,139.2" stroke="#707070"/><polyline points="439.4,139.2 444.7,144.6 444.3,137.1" stroke="#707070"/><polyline points="444.3,137.1 449.6,142.4 449.2,134.9" stroke="#707070"/><polyline points="449.2,134.9 454.5,140.2 454.2,132.7" stroke="#707070"/><polyline points="390.3,168.6 395.6,173.9 395.3,166.4" stroke="#434343"/><polyline points="395.3,166.4 400.6,171.7 400.2,164.2" stroke="#5c5c5c"/><polyline points="400.2,164.2 405.5,169.5 405.1,162.0" stroke="#636363"/><polyline points="405.1,162.0 410.4,167.3 410.1,159.8" stroke="#6b6b6b"/><polyline points="410.1,159.8 415.4,165.1 415.0,157.7" stroke="#7e7e7e"/><polyline points="415.0,157.7 420.3,163.0 420.0,155.5" stroke="#868686"/><polyline points="420.0,155.5 425.3,160.8 424.9,153.3" stroke="#707070"/><polyline points="424.9,153.3 430.2,158.6 429.8,151.1" stroke="#707070"/><polyline points="429.8,151.1 435.1,156.4 434.8,148.9" stroke="#707070"/><polyline points="434.8,148.9 440.1,154.2 439.7,146.7" stroke="#707070"/><polyline points="439.7,146.7 445.0,152.1 444.7,144.6" stroke="#707070"/><polyline points="444.7,144.6 450.0,149.9 449.6,142.4" stroke="#707070"/><polyline points="449.6,142.4 454.9,147.7 454.5,140.2" stroke="#707070"/><polyline points="454.5,140.2 459.8,145.5 459.5,138.0" stroke="#707070"/><polyline points="380.8,180.4 386.1,185.7 385.7,178.2" stroke="#343434"/><polyline points="385.7,178.2 391.0,183.6 390.7,176.1" stroke="#575757"/><polyline points="390.7,176.1 396.0,181.4 395.6,173.9" stroke="#6e6e6e"/><polyline points="395.6,173.9 400.9,179.2 400.6,171.7" stroke="#636363"/><polyline points="400.6,171.7 405.9,177.0 405.5,169.5" stroke="#696969"/><polyline points="405.5,169.5 410.8,174.8 410.4,167.3" stroke="#7a7a7a"/><polyline points="410.4,167.3 415.7,172.6 415.4,165.1" stroke="#8b8b8b"/><polyline points="415.4,165.1 420.7,170.5 420.3,163.0" stroke="#707070"/><polyline points="420.3,163.0 425.6,168.3 425.3,160.8" stroke="#707070"/><polyline points="425.3,160.8 430.6,166.1 430.2,158.6" stroke="#707070"/><polyline points="430.2,158.6 435.5,163.9 435.1,156.4" stroke="#707070"/><polyline points="435.1,156.4 440.4,161.7 440.1,154.2" stroke="#707070"/><polyline points="440.1,154.2 445.4,159.6 445.0,152.1" stroke="#707070"/><polyline points="445.0,152.1 450.3,157.4 450.0,149.9" stroke="#707070"/><polyline points="450.0,149.9 455.3,155.2 454.9,147.7" stroke="#707070"/><polyline points="454.9,147.7 460.2,153.0 459.8,145.5" stroke="#707070"/><polyline points="459.8,145.5 465.1,150.8 464.8,143.3" stroke="#707070"/><polyline points="376.2,190.1 381.5,195.4 381.1,187.9" stroke="#333333"/><polyline points="381.1,187.9 386.4,193.2 386.1,185.7" stroke="#3d3d3d"/><polyline points="386.1,185.7 391.4,191.0 391.0,183.6" stroke="#595959"/><polyline points="391.0,183.6 396.3,188.9 396.0,181.4" stroke="#676767"/><polyline points="396.0,181.4 401.3,186.7 400.9,179.2" stroke="#676767"/><polyline points="400.9,179.2 406.2,184.5 405.9,177.0" stroke="#6e6e6e"/><polyline points="405.9,177.0 411.2,182.3 410.8,174.8" stroke="#787878"/><polyline points="410.8,174.8 416.1,180.1 415.7,172.6" stroke="#858585"/><polyline points="415.7,172.6 421.0,178.0 420.7,170.5" stroke="#707070"/><polyline points="420.7,170.5 426.0,175.8 425.6,168.3" stroke="#707070"/><polyline points="425.6,168.3 430.9,173.6 430.6,166.1" stroke="#707070"/><polyline points="430.6,166.1 435.9,171.4 435.5,163.9" stroke="#707070"/><polyline points="435.5,163.9 440.8,169.2 440.4,161.7" stroke="#707070"/><polyline points="440.4,161.7 445.7,167.0 445.4,159.6" stroke="#707070"/><polyline points="445.4,159.6 450.7,164.9 450.3,157.4" stroke="#707070"/><polyline points="450.3,157.4 455.6,162.7 455.3,155.2" stroke="#707070"/><polyline points="455.3,155.2 460.6,160.5 460.2,153.0" stroke="#707070"/><polyline points="460.2,153.0 465.5,158.3 465.1,150.8" stroke="#707070"/><polyline points="465.1,150.8 470.4,156.1 470.1,148.6" stroke="#707070"/><polyline points="376.6,197.6 381.9,202.9 381.5,195.4" stroke="#424242"/><polyline points="381.5,195.4 386.8,200.7 386.4,193.2" stroke="#3d3d3d"/><polyline points="386.4,193.2 391.7,198.5 391.4,191.0" stroke="#6e6e6e"/><polyline points="391.4,191.0 396.7,196.4 396.3,188.9" stroke="#616161"/><polyline points="396.3,188.9 401.6,194.2 401.3,186.7" stroke="#636363"/><polyline points="401.3,186.7 406.6,192.0 406.2,184.5" stroke="#7c7c7c"/><polyline points="406.2,184.5 411.5,189.8 411.2,182.3" stroke="#7d7d7d"/><polyline points="411.2,182.3 416.4,187.6 416.1,180.1" stroke="#6d6d6d"/><polyline points="416.1,180.1 421.4,185.5 421.0,178.0" stroke="#868686"/><polyline points="421.0,178.0 426.3,183.3 426.0,175.8" stroke="#707070"/><polyline points="426.0,175.8 431.3,181.1 430.9,173.6" stroke="#707070"/><polyline points="430.9,173.6 436.2,178.9 435.9,171.4" stroke="#707070"/><polyline points="435.9,171.4 441.2,176.7 440.8,169.2" stroke="#707070"/><polyline points="440.8,169.2 446.1,174.5 445.7,167.0" stroke="#707070"/><polyline points="445.7,167.0 451.0,172.4 450.7,164.9" stroke="#707070"/><polyline points="450.7,164.9 456.0,170.2 455.6,162.7" stroke="#707070"/><polyline points="455.6,162.7 460.9,168.0 460.6,160.5" stroke="#707070"/><polyline points="460.6,160.5 465.9,165.8 465.5,158.3" stroke="#707070"/><polyline points="465.5,158.3 470.8,163.6 470.4,156.1" stroke="#707070"/><polyline points="381.9,202.9 387.2,208.2 386.8,200.7" stroke="#3a3a3a"/><polyline points="386.8,200.7 392.1,206.0 391.7,198.5" stroke="#535353"/><polyline points="391.7,198.5 397.0,203.9 396.7,196.4" stroke="#6a6a6a"/><polyline points="396.7,196.4 402.0,201.7 401.6,194.2" stroke="#707070"/><polyline points="401.6,194.2 406.9,199.5 406.6,192.0" stroke="#717171"/><polyline points="406.6,192.0 411.9,197.3 411.5,189.8" stroke="#727272"/><polyline points="411.5,189.8 416.8,195.1 416.4,187.6" stroke="#7b7b7b"/><polyline points="416.4,187.6 421.7,192.9 421.4,185.5" stroke="#868686"/><polyline points="421.4,185.5 426.7,190.8 426.3,183.3" stroke="#8a8a8a"/><polyline points="426.3,183.3 431.6,188.6 431.3,181.1" stroke="#707070"/><polyline points="431.3,181.1 436.6,186.4 436.2,178.9" stroke="#707070"/><polyline points="436.2,178.9 441.5,184.2 441.2,176.7" stroke="#707070"/><polyline points="441.2,176.7 446.5,182.0 446.1,174.5" stroke="#707070"/><polyline points="446.1,174.5 451.4,179.9 451.0,172.4" stroke="#707070"/><polyline points="451.0,172.4 456.3,177.7 456.0,170.2" stroke="#707070"/><polyline points="456.0,170.2 461.3,175.5 460.9,168.0" stroke="#707070"/><polyline points="460.9,168.0 466.2,173.3 465.9,165.8" stroke="#636363"/><polyline points="465.9,165.8 471.2,171.1 470.8,163.6" stroke="#707070"/><polyline points="470.8,163.6 476.1,169.0 475.7,161.5" stroke="#707070"/><polyline points="387.2,208.2 392.5,213.5 392.1,206.0" stroke="#434343"/><polyline points="392.1,206.0 397.4,211.4 397.0,203.9" stroke="#5b5b5b"/><polyline points="397.0,203.9 402.3,209.2 402.0,201.7" stroke="#6b6b6b"/><polyline points="402.0,201.7 407.3,207.0 406.9,199.5" stroke="#696969"/><polyline points="406.9,199.5 412.2,204.8 411.9,197.3" stroke="#707070"/><polyline points="411.9,197.3 417.2,202.6 416.8,195.1" stroke="#707070"/><polyline points="416.8,195.1 422.1,200.4 421.7,192.9" stroke="#828282"/><polyline points="421.7,192.9 427.0,198.3 426.7,190.8" stroke="#6d6d6d"/><polyline points="426.7,190.8 432.0,196.1 431.6,188.6" stroke="#707070"/><polyline points="431.6,188.6 436.9,193.9 436.6,186.4" stroke="#707070"/><polyline points="436.6,186.4 441.9,191.7 441.5,184.2" stroke="#707070"/><polyline points="441.5,184.2 446.8,189.5 446.5,182.0" stroke="#707070"/><polyline points="446.5,182.0 451.8,187.4 451.4,179.9" stroke="#707070"/><polyline points="451.4,179.9 456.7,185.2 456.3,177.7" stroke="#707070"/><polyline points="456.3,177.7 461.6,183.0 461.3,175.5" stroke="#676767"/><polyline points="461.3,175.5 466.6,180.8 466.2,173.3" stroke="#707070"/><polyline points="466.2,173.3 471.5,178.6 471.2,171.1" stroke="#707070"/><polyline points="471.2,171.1 476.5,176.4 476.1,169.0" stroke="#707070"/><polyline points="476.1,169.0 481.4,174.3 481.0,166.8" stroke="#707070"/><polyline points="392.5,213.5 397.8,218.8 397.4,211.4" stroke="#3f3f3f"/><polyline points="397.4,211.4 402.7,216.7 402.3,209.2" stroke="#525252"/><polyline points="402.3,209.2 407.6,214.5 407.3,207.0" stroke="#616161"/><polyline points="407.3,207.0 412.6,212.3 412.2,204.8" stroke="#6c6c6c"/><polyline points="412.2,204.8 417.5,210.1 417.2,202.6" stroke="#6e6e6e"/><polyline points="417.2,202.6 422.5,207.9 422.1,200.4" stroke="#787878"/><polyline points="422.1,200.4 427.4,205.8 427.0,198.3" stroke="#7f7f7f"/><polyline points="427.0,198.3 432.3,203.6 432.0,196.1" stroke="#707070"/><polyline points="432.0,196.1 437.3,201.4 436.9,193.9" stroke="#707070"/><polyline points="436.9,193.9 442.2,199.2 441.9,191.7" stroke="#707070"/><polyline points="441.9,191.7 447.2,197.0 446.8,189.5" stroke="#606060"/><polyline points="446.8,189.5 452.1,194.9 451.8,187.4" stroke="#707070"/><polyline points="451.8,187.4 457.0,192.7 456.7,185.2" stroke="#707070"/><polyline points="456.7,185.2 462.0,190.5 461.6,183.0" stroke="#707070"/><polyline points="461.6,183.0 466.9,188.3 466.6,180.8" stroke="#707070"/><polyline points="466.6,180.8 471.9,186.1 471.5,178.6" stroke="#707070"/><polyline points="471.5,178.6 476.8,183.9 476.5,176.4" stroke="#666666"/><polyline points="476.5,176.4 481.8,181.8 481.4,174.3" stroke="#707070"/><polyline points="397.8,218.8 403.1,224.2 402.7,216.7" stroke="#434343"/><polyline points="402.7,216.7 408.0,222.0 407.6,214.5" stroke="#525252"/><polyline points="407.6,214.5 412.9,219.8 412.6,212.3" stroke="#707070"/><polyline points="412.6,212.3 417.9,217.6 417.5,210.1" stroke="#646464"/><polyline points="417.5,210.1 422.8,215.4 422.5,207.9" stroke="#6c6c6c"/><polyline points="422.5,207.9 427.8,213.3 427.4,205.8" stroke="#7b7b7b"/><polyline points="427.4,205.8 432.7,211.1 432.3,203.6" stroke="#838383"/><polyline points="432.3,203.6 437.6,208.9 437.3,201.4" stroke="#868686"/><polyline points="437.3,201.4 442.6,206.7 442.2,199.2" stroke="#707070"/><polyline points="442.2,199.2 447.5,204.5 447.2,197.0" stroke="#707070"/><polyline points="447.2,197.0 452.5,202.3 452.1,194.9" stroke="#707070"/><polyline points="452.1,194.9 457.4,200.2 457.0,192.7" stroke="#707070"/><polyline points="457.0,192.7 462.3,198.0 462.0,190.5" stroke="#676767"/><polyline points="462.0,190.5 467.3,195.8 466.9,188.3" stroke="#707070"/><polyline points="466.9,188.3 472.2,193.6 471.9,186.1" stroke="#707070"/><polyline points="471.9,186.1 477.2,191.4 476.8,183.9" stroke="#707070"/><polyline points="476.8,183.9 482.1,189.3 481.8,181.8" stroke="#707070"/><polyline points="481.8,181.8 487.1,187.1 486.7,179.6" stroke="#707070"/><polyline points="403.1,224.2 408.4,229.5 408.0,222.0" stroke="#434343"/><polyline points="408.0,222.0 413.3,227.3 412.9,219.8" stroke="#575757"/><polyline points="412.9,219.8 418.2,225.1 417.9,217.6" stroke="#707070"/><polyline points="417.9,217.6 423.2,222.9 422.8,215.4" stroke="#6c6c6c"/><polyline points="422.8,215.4 428.1,220.7 427.8,213.3" stroke="#676767"/><polyline points="427.8,213.3 433.1,218.6 432.7,211.1" stroke="#595959"/><polyline points="432.7,211.1 438.0,216.4 437.6,208.9" stroke="#808080"/><polyline points="437.6,208.9 442.9,214.2 442.6,206.7" stroke="#6d6d6d"/><polyline points="442.6,206.7 447.9,212.0 447.5,204.5" stroke="#707070"/><polyline points="447.5,204.5 452.8,209.8 452.5,202.3" stroke="#707070"/><polyline points="452.5,202.3 457.8,207.7 457.4,200.2" stroke="#707070"/><polyline points="457.4,200.2 462.7,205.5 462.3,198.0" stroke="#707070"/><polyline points="462.3,198.0 467.6,203.3 467.3,195.8" stroke="#707070"/><polyline points="467.3,195.8 472.6,201.1 472.2,193.6" stroke="#707070"/><polyline points="472.2,193.6 477.5,198.9 477.2,191.4" stroke="#636363"/><polyline points="477.2,191.4 482.5,196.8 482.1,189.3" stroke="#707070"/><polyline points="482.1,189.3 487.4,194.6 487.1,187.1" stroke="#707070"/><polyline points="487.1,187.1 492.4,192.4 492.0,184.9" stroke="#6b6b6b"/><polyline points="408.4,229.5 413.7,234.8 413.3,227.3" stroke="#3b3b3b"/><polyline points="413.3,227.3 418.6,232.6 418.2,225.1" stroke="#434343"/><polyline points="418.2,225.1 423.5,230.4 423.2,222.9" stroke="#6f6f6f"/><polyline points="423.2,222.9 428.5,228.2 428.1,220.7" stroke="#5f5f5f"/><polyline points="428.1,220.7 433.4,226.1 433.1,218.6" stroke="#5f5f5f"/><polyline points="433.1,218.6 438.4,223.9 438.0,216.4" stroke="#595959"/><polyline points="438.0,216.4 443.3,221.7 442.9,214.2" stroke="#6a6a6a"/><polyline points="442.9,214.2 448.2,219.5 447.9,212.0" stroke="#8b8b8b"/><polyline points="447.9,212.0 453.2,217.3 452.8,209.8" stroke="#8c8c8c"/><polyline points="452.8,209.8 458.1,215.2 457.8,207.7" stroke="#707070"/><polyline points="457.8,207.7 463.1,213.0 462.7,205.5" stroke="#707070"/><polyline points="462.7,205.5 468.0,210.8 467.6,203.3" stroke="#646464"/><polyline points="467.6,203.3 472.9,208.6 472.6,201.1" stroke="#707070"/><polyline points="472.6,201.1 477.9,206.4 477.5,198.9" stroke="#707070"/><polyline points="477.5,198.9 482.8,204.2 482.5,196.8" stroke="#707070"/><polyline points="482.5,196.8 487.8,202.1 487.4,194.6" stroke="#707070"/><polyline points="487.4,194.6 492.7,199.9 492.4,192.4" stroke="#6b6b6b"/><polyline points="413.7,234.8 419.0,240.1 418.6,232.6" stroke="#363636"/><polyline points="418.6,232.6 423.9,237.9 423.5,230.4" stroke="#3f3f3f"/><polyline points="423.5,230.4 428.8,235.7 428.5,228.2" stroke="#535353"/><polyline points="428.5,228.2 433.8,233.6 433.4,226.1" stroke="#6c6c6c"/><polyline points="433.4,226.1 438.7,231.4 438.4,223.9" stroke="#6f6f6f"/><polyline points="438.4,223.9 443.7,229.2 443.3,221.7" stroke="#626262"/><polyline points="443.3,221.7 448.6,227.0 448.2,219.5" stroke="#6a6a6a"/><polyline points="448.2,219.5 453.5,224.8 453.2,217.3" stroke="#737373"/><polyline points="453.2,217.3 458.5,222.7 458.1,215.2" stroke="#868686"/><polyline points="458.1,215.2 463.4,220.5 463.1,213.0" stroke="#909090"/><polyline points="463.1,213.0 468.4,218.3 468.0,210.8" stroke="#707070"/><polyline points="468.0,210.8 473.3,216.1 472.9,208.6" stroke="#707070"/><polyline points="472.9,208.6 478.2,213.9 477.9,206.4" stroke="#707070"/><polyline points="477.9,206.4 483.2,211.7 482.8,204.2" stroke="#707070"/><polyline points="482.8,204.2 488.1,209.6 487.8,202.1" stroke="#707070"/><polyline points="487.8,202.1 493.1,207.4 492.7,199.9" stroke="#707070"/><polyline points="492.7,199.9 498.0,205.2 497.7,197.7" stroke="#707070"/><polyline points="419.0,240.1 424.3,245.4 423.9,237.9" stroke="#343434"/><polyline points="423.9,237.9 429.2,243.2 428.8,235.7" stroke="#353535"/><polyline points="428.8,235.7 434.1,241.1 433.8,233.6" stroke="#434343"/><polyline points="433.8,233.6 439.1,238.9 438.7,231.4" stroke="#434343"/><polyline points="438.7,231.4 444.0,236.7 443.7,229.2" stroke="#6a6a6a"/><polyline points="443.7,229.2 449.0,234.5 448.6,227.0" stroke="#6b6b6b"/><polyline points="448.6,227.0 453.9,232.3 453.5,224.8" stroke="#6f6f6f"/><polyline points="453.5,224.8 458.8,230.1 458.5,222.7" stroke="#787878"/><polyline points="458.5,222.7 463.8,228.0 463.4,220.5" stroke="#818181"/><polyline points="463.4,220.5 468.7,225.8 468.4,218.3" stroke="#868686"/><polyline points="468.4,218.3 473.7,223.6 473.3,216.1" stroke="#8f8f8f"/><polyline points="473.3,216.1 478.6,221.4 478.2,213.9" stroke="#707070"/><polyline points="478.2,213.9 483.5,219.2 483.2,211.7" stroke="#707070"/><polyline points="483.2,211.7 488.5,217.1 488.1,209.6" stroke="#707070"/><polyline points="488.1,209.6 493.4,214.9 493.1,207.4" stroke="#707070"/><polyline points="493.1,207.4 498.4,212.7 498.0,205.2" stroke="#707070"/><polyline points="424.3,245.4 429.5,250.7 429.2,243.2" stroke="#3f3f3f"/><polyline points="429.2,243.2 434.5,248.6 434.1,241.1" stroke="#404040"/><polyline points="434.1,241.1 439.4,246.4 439.1,238.9" stroke="#515151"/><polyline points="439.1,238.9 444.4,244.2 444.0,236.7" stroke="#434343"/><polyline points="444.0,236.7 449.3,242.0 449.0,234.5" stroke="#555555"/><polyline points="449.0,234.5 454.3,239.8 453.9,232.3" stroke="#404040"/><polyline points="453.9,232.3 459.2,237.6 458.8,230.1" stroke="#6f6f6f"/><polyline points="458.8,230.1 464.1,235.5 463.8,228.0" stroke="#686868"/><polyline points="463.8,228.0 469.1,233.3 468.7,225.8" stroke="#767676"/><polyline points="468.7,225.8 474.0,231.1 473.7,223.6" stroke="#828282"/><polyline points="473.7,223.6 479.0,228.9 478.6,221.4" stroke="#898989"/><polyline points="478.6,221.4 483.9,226.7 483.5,219.2" stroke="#8c8c8c"/><polyline points="483.5,219.2 488.8,224.6 488.5,217.1" stroke="#5e5e5e"/><polyline points="488.5,217.1 493.8,222.4 493.4,214.9" stroke="#707070"/><polyline points="493.4,214.9 498.7,220.2 498.4,212.7" stroke="#707070"/><polyline points="498.4,212.7 503.7,218.0 503.3,210.5" stroke="#707070"/><polyline points="429.5,250.7 434.8,256.0 434.5,248.6" stroke="#333333"/><polyline points="434.5,248.6 439.8,253.9 439.4,246.4" stroke="#404040"/><polyline points="439.4,246.4 444.7,251.7 444.4,244.2" stroke="#333333"/><polyline points="444.4,244.2 449.7,249.5 449.3,242.0" stroke="#434343"/><polyline points="449.3,242.0 454.6,247.3 454.3,239.8" stroke="#3e3e3e"/><polyline points="454.3,239.8 459.6,245.1 459.2,237.6" stroke="#525252"/><polyline points="459.2,237.6 464.5,243.0 464.1,235.5" stroke="#5b5b5b"/><polyline points="464.1,235.5 469.4,240.8 469.1,233.3" stroke="#5f5f5f"/><polyline points="469.1,233.3 474.4,238.6 474.0,231.1" stroke="#777777"/><polyline points="474.0,231.1 479.3,236.4 479.0,228.9" stroke="#7f7f7f"/><polyline points="479.0,228.9 484.3,234.2 483.9,226.7" stroke="#8a8a8a"/><polyline points="483.9,226.7 489.2,232.0 488.8,224.6" stroke="#707070"/><polyline points="488.8,224.6 494.1,229.9 493.8,222.4" stroke="#5f5f5f"/><polyline points="493.8,222.4 499.1,227.7 498.7,220.2" stroke="#707070"/><polyline points="498.7,220.2 504.0,225.5 503.7,218.0" stroke="#707070"/><polyline points="434.8,256.0 440.1,261.4 439.8,253.9" stroke="#333333"/><polyline points="439.8,253.9 445.1,259.2 444.7,251.7" stroke="#383838"/><polyline points="444.7,251.7 450.0,257.0 449.7,249.5" stroke="#3d3d3d"/><polyline points="449.7,249.5 455.0,254.8 454.6,247.3" stroke="#343434"/><polyline points="454.6,247.3 459.9,252.6 459.6,245.1" stroke="#424242"/><polyline points="459.6,245.1 464.9,250.5 464.5,243.0" stroke="#424242"/><polyline points="464.5,243.0 469.8,248.3 469.4,240.8" stroke="#6d6d6d"/><polyline points="469.4,240.8 474.7,246.1 474.4,238.6" stroke="#565656"/><polyline points="474.4,238.6 479.7,243.9 479.3,236.4" stroke="#7a7a7a"/><polyline points="479.3,236.4 484.6,241.7 484.3,234.2" stroke="#8b8b8b"/><polyline points="484.3,234.2 489.6,239.5 489.2,232.0" stroke="#848484"/><polyline points="489.2,232.0 494.5,237.4 494.1,229.9" stroke="#707070"/><polyline points="494.1,229.9 499.4,235.2 499.1,227.7" stroke="#666666"/><polyline points="499.1,227.7 504.4,233.0 504.0,225.5" stroke="#707070"/><polyline points="440.1,261.4 445.4,266.7 445.1,259.2" stroke="#333333"/><polyline points="445.1,259.2 450.4,264.5 450.0,257.0" stroke="#333333"/><polyline points="450.0,257.0 455.3,262.3 455.0,254.8" stroke="#3e3e3e"/><polyline points="455.0,254.8 460.3,260.1 459.9,252.6" stroke="#373737"/><polyline points="459.9,252.6 465.2,257.9 464.9,250.5" stroke="#525252"/><polyline points="464.9,250.5 470.1,255.8 469.8,248.3" stroke="#5b5b5b"/><polyline points="469.8,248.3 475.1,253.6 474.7,246.1" stroke="#5e5e5e"/><polyline points="474.7,246.1 480.0,251.4 479.7,243.9" stroke="#5b5b5b"/><polyline points="479.7,243.9 485.0,249.2 484.6,241.7" stroke="#828282"/><polyline points="484.6,241.7 489.9,247.0 489.6,239.5" stroke="#8f8f8f"/><polyline points="489.6,239.5 494.9,244.9 494.5,237.4" stroke="#707070"/><polyline points="494.5,237.4 499.8,242.7 499.4,235.2" stroke="#707070"/><polyline points="499.4,235.2 504.7,240.5 504.4,233.0" stroke="#707070"/><polyline points="504.4,233.0 509.7,238.3 509.3,230.8" stroke="#707070"/><polyline points="445.4,266.7 450.7,272.0 450.4,264.5" stroke="#333333"/><polyline points="450.4,264.5 455.7,269.8 455.3,262.3" stroke="#363636"/><polyline points="455.3,262.3 460.6,267.6 460.3,260.1" stroke="#3e3e3e"/><polyline points="460.3,260.1 465.6,265.4 465.2,257.9" stroke="#343434"/><polyline points="465.2,257.9 470.5,263.3 470.1,255.8" stroke="#565656"/><polyline points="470.1,255.8 475.4,261.1 475.1,253.6" stroke="#5e5e5e"/><polyline points="475.1,253.6 480.4,258.9 480.0,251.4" stroke="#535353"/><polyline points="480.0,251.4 485.3,256.7 485.0,249.2" stroke="#7b7b7b"/><polyline points="485.0,249.2 490.3,254.5 489.9,247.0" stroke="#6a6a6a"/><polyline points="489.9,247.0 495.2,252.4 494.9,244.9" stroke="#8c8c8c"/><polyline points="494.9,244.9 500.2,250.2 499.8,242.7" stroke="#707070"/><polyline points="499.8,242.7 505.1,248.0 504.7,240.5" stroke="#707070"/><polyline points="504.7,240.5 510.0,245.8 509.7,238.3" stroke="#707070"/><polyline points="450.7,272.0 456.0,277.3 455.7,269.8" stroke="#343434"/><polyline points="455.7,269.8 461.0,275.1 460.6,267.6" stroke="#404040"/><polyline points="460.6,267.6 465.9,272.9 465.6,265.4" stroke="#333333"/><polyline points="465.6,265.4 470.9,270.8 470.5,263.3" stroke="#353535"/><polyline points="470.5,263.3 475.8,268.6 475.4,261.1" stroke="#434343"/><polyline points="475.4,261.1 480.7,266.4 480.4,258.9" stroke="#6f6f6f"/><polyline points="480.4,258.9 485.7,264.2 485.3,256.7" stroke="#747474"/><polyline points="485.3,256.7 490.6,262.0 490.3,254.5" stroke="#757575"/><polyline points="490.3,254.5 495.6,259.9 495.2,252.4" stroke="#8c8c8c"/><polyline points="495.2,252.4 500.5,257.7 500.2,250.2" stroke="#5f5f5f"/><polyline points="500.2,250.2 505.5,255.5 505.1,248.0" stroke="#5f5f5f"/><polyline points="505.1,248.0 510.4,253.3 510.0,245.8" stroke="#707070"/><polyline points="456.0,277.3 461.3,282.6 461.0,275.1" stroke="#383838"/><polyline points="461.0,275.1 466.3,280.4 465.9,272.9" stroke="#363636"/><polyline points="465.9,272.9 471.2,278.3 470.9,270.8" stroke="#3e3e3e"/><polyline points="470.9,270.8 476.2,276.1 475.8,268.6" stroke="#525252"/><polyline points="475.8,268.6 481.1,273.9 480.7,266.4" stroke="#424242"/><polyline points="480.7,266.4 486.0,271.7 485.7,264.2" stroke="#6a6a6a"/><polyline points="485.7,264.2 491.0,269.5 490.6,262.0" stroke="#727272"/><polyline points="490.6,262.0 495.9,267.3 495.6,259.9" stroke="#6b6b6b"/><polyline points="495.6,259.9 500.9,265.2 500.5,257.7" stroke="#8a8a8a"/><polyline points="500.5,257.7 505.8,263.0 505.5,255.5" stroke="#707070"/><polyline points="505.5,255.5 510.7,260.8 510.4,253.3" stroke="#707070"/><polyline points="461.3,282.6 466.6,287.9 466.3,280.4" stroke="#353535"/><polyline points="466.3,280.4 471.6,285.8 471.2,278.3" stroke="#3c3c3c"/><polyline points="471.2,278.3 476.5,283.6 476.2,276.1" stroke="#3a3a3a"/><polyline points="476.2,276.1 481.5,281.4 481.1,273.9" stroke="#515151"/><polyline points="481.1,273.9 486.4,279.2 486.0,271.7" stroke="#5e5e5e"/><polyline points="486.0,271.7 491.3,277.0 491.0,269.5" stroke="#767676"/><polyline points="491.0,269.5 496.3,274.8 495.9,267.3" stroke="#7a7a7a"/><polyline points="495.9,267.3 501.2,272.7 500.9,265.2" stroke="#707070"/><polyline points="500.9,265.2 506.2,270.5 505.8,263.0" stroke="#707070"/><polyline points="505.8,263.0 511.1,268.3 510.7,260.8" stroke="#707070"/><polyline points="466.6,287.9 471.9,293.2 471.6,285.8" stroke="#363636"/><polyline points="471.6,285.8 476.9,291.1 476.5,283.6" stroke="#333333"/><polyline points="476.5,283.6 481.8,288.9 481.5,281.4" stroke="#343434"/><polyline points="481.5,281.4 486.8,286.7 486.4,279.2" stroke="#535353"/><polyline points="486.4,279.2 491.7,284.5 491.3,277.0" stroke="#616161"/><polyline points="491.3,277.0 496.6,282.3 496.3,274.8" stroke="#767676"/><polyline points="496.3,274.8 501.6,280.2 501.2,272.7" stroke="#6c6c6c"/><polyline points="501.2,272.7 506.5,278.0 506.2,270.5" stroke="#707070"/><polyline points="506.2,270.5 511.5,275.8 511.1,268.3" stroke="#707070"/><polyline points="467.0,295.4 472.3,300.7 471.9,293.2" stroke="#3d3d3d"/><polyline points="471.9,293.2 477.2,298.6 476.9,291.1" stroke="#363636"/><polyline points="476.9,291.1 482.2,296.4 481.8,288.9" stroke="#414141"/><polyline points="481.8,288.9 487.1,294.2 486.8,286.7" stroke="#3e3e3e"/><polyline points="486.8,286.7 492.1,292.0 491.7,284.5" stroke="#656565"/><polyline points="491.7,284.5 497.0,289.8 496.6,282.3" stroke="#5b5b5b"/><polyline points="496.6,282.3 501.9,287.7 501.6,280.2" stroke="#6e6e6e"/><polyline points="501.6,280.2 506.9,285.5 506.5,278.0" stroke="#5e5e5e"/><polyline points="506.5,278.0 511.8,283.3 511.5,275.8" stroke="#707070"/><polyline points="472.3,300.7 477.6,306.1 477.2,298.6" stroke="#333333"/><polyline points="477.2,298.6 482.5,303.9 482.2,296.4" stroke="#3d3d3d"/><polyline points="482.2,296.4 487.5,301.7 487.1,294.2" stroke="#393939"/><polyline points="487.1,294.2 492.4,299.5 492.1,292.0" stroke="#6e6e6e"/><polyline points="492.1,292.0 497.4,297.3 497.0,289.8" stroke="#717171"/><polyline points="497.0,289.8 502.3,295.1 501.9,287.7" stroke="#6d6d6d"/><polyline points="501.9,287.7 507.2,293.0 506.9,285.5" stroke="#707070"/><polyline points="472.7,308.2 478.0,313.6 477.6,306.1" stroke="#333333"/><polyline points="477.6,306.1 482.9,311.4 482.5,303.9" stroke="#3e3e3e"/><polyline points="482.5,303.9 487.8,309.2 487.5,301.7" stroke="#454545"/><polyline points="487.5,301.7 492.8,307.0 492.4,299.5" stroke="#727272"/><polyline points="492.4,299.5 497.7,304.8 497.4,297.3" stroke="#6d6d6d"/><polyline points="497.4,297.3 502.7,302.6 502.3,295.1" stroke="#707070"/><polyline points="468.1,317.9 473.4,323.2 473.0,315.7" stroke="#363636"/><polyline points="473.0,315.7 478.3,321.0 478.0,313.6" stroke="#3a3a3a"/><polyline points="478.0,313.6 483.2,318.9 482.9,311.4" stroke="#6b6b6b"/><polyline points="482.9,311.4 488.2,316.7 487.8,309.2" stroke="#838383"/><polyline points="487.8,309.2 493.1,314.5 492.8,307.0" stroke="#707070"/><polyline points="463.5,327.6 468.8,332.9 468.4,325.4" stroke="#343434"/><polyline points="468.4,325.4 473.7,330.7 473.4,323.2" stroke="#525252"/></g>
<polygon points="431,166 440,164 463,222 452,229" fill="#fff" opacity="0.22"/>
<polygon points="446,168 472,176 494,244 468,238" fill="#000" opacity="0.13"/>
<polygon points="453,177 457,177 467,190 465,192" fill="#303030"/>
<polygon points="468,202 473,203 484,224 480,226" fill="#080808"/>
<polygon points="449,223 456,222 456,227 450,228" fill="#e8e8e8"/>
</g>
<rect x="480.00" y="15" width="13.69" height="19" fill="rgb(0,0,0)"/><rect x="493.39" y="15" width="13.69" height="19" fill="rgb(15,15,15)"/><rect x="506.78" y="15" width="13.69" height="19" fill="rgb(30,30,30)"/><rect x="520.17" y="15" width="13.69" height="19" fill="rgb(45,45,45)"/><rect x="533.56" y="15" width="13.69" height="19" fill="rgb(60,60,60)"/><rect x="546.94" y="15" width="13.69" height="19" fill="rgb(75,75,75)"/><rect x="560.33" y="15" width="13.69" height="19" fill="rgb(90,90,90)"/><rect x="573.72" y="15" width="13.69" height="19" fill="rgb(105,105,105)"/><rect x="587.11" y="15" width="13.69" height="19" fill="rgb(120,120,120)"/><rect x="600.50" y="15" width="13.69" height="19" fill="rgb(135,135,135)"/><rect x="613.89" y="15" width="13.69" height="19" fill="rgb(150,150,150)"/><rect x="627.28" y="15" width="13.69" height="19" fill="rgb(165,165,165)"/><rect x="640.67" y="15" width="13.69" height="19" fill="rgb(180,180,180)"/><rect x="654.06" y="15" width="13.69" height="19" fill="rgb(195,195,195)"/><rect x="667.44" y="15" width="13.69" height="19" fill="rgb(210,210,210)"/><rect x="680.83" y="15" width="13.69" height="19" fill="rgb(225,225,225)"/><rect x="694.22" y="15" width="13.69" height="19" fill="rgb(240,240,240)"/><rect x="707.61" y="15" width="13.69" height="19" fill="rgb(255,255,255)"/><rect x="480" y="12" width="1" height="24" fill="#fff"/><rect x="721" y="12" width="1" height="24" fill="#fff"/><rect x="528" y="34" width="1" height="3" fill="#fff"/><rect x="576" y="34" width="1" height="3" fill="#fff"/><rect x="624" y="34" width="1" height="3" fill="#fff"/><rect x="672" y="34" width="1" height="3" fill="#fff"/>
<rect x="0" y="405" width="76" height="16" fill="#fff"/><rect x="1" y="406" width="14" height="7" fill="#000"/><rect x="15" y="413" width="16" height="7" fill="#000"/><rect x="31" y="406" width="15" height="7" fill="#000"/><rect x="46" y="413" width="15" height="7" fill="#000"/><rect x="61" y="406" width="14" height="7" fill="#000"/>
</g>
<g shape-rendering="crispEdges" fill="none" stroke-width="1">
<polyline points="213.5,47 213.5,264.5" fill="none" stroke="#00ffff" stroke-width="1" />
<polyline points="365.5,46.5 363,92.6 360.8,136 359.5,160.5 352,160.5" fill="none" stroke="#00ffff" stroke-width="1" />
<polyline points="364.5,46.5 363,92.6" fill="none" stroke="#00ffff" stroke-width="1" />
<polyline points="343.5,45.5 369,45.5" fill="none" stroke="#00ffff" stroke-width="1" />
<polyline points="343.5,48.5 368,48.5" fill="none" stroke="#00ffff" stroke-width="1" />
<polyline points="343.5,45.5 329.3,120 325.5,140 322.5,222" fill="none" stroke="#00ffff" stroke-width="1" />
<polyline points="328.5,135 326.8,162" fill="none" stroke="#00ffff" stroke-width="1" />
<polyline points="369,46.5 497,48.5 477.3,134.2 470.4,165.6 464.7,197 458.5,231.5" fill="none" stroke="#00ffff" stroke-width="1" />
<polyline points="368,49.5 495.5,51.5 477,138.5" fill="none" stroke="#00ffff" stroke-width="1" />
<polygon points="437.5,36.5 581.5,37.5 579.5,146 436,144.5" fill="none" stroke="#00ffff" stroke-width="1" />
<polygon points="440.5,37.5 576.5,37.5 575.5,144.5 439,143" fill="none" stroke="#00ffff" stroke-width="1" />
<polyline points="328.7,135 400,136 476,138.5 470,150 400,148.6 323.7,147.6 323.7,150.5" fill="none" stroke="#00ffff" stroke-width="1" />
<polyline points="325,138.7 400,139.3 478,140.5 468,152.6 400,151.4 323.7,150.5" fill="none" stroke="#00ffff" stroke-width="1" />
<polyline points="328.7,137 346,137" fill="none" stroke="#00ffff" stroke-width="1" />
<polyline points="213.5,142.4 324,139.5" fill="none" stroke="#00ffff" stroke-width="1" />
<polyline points="213.5,145.6 345,141.6" fill="none" stroke="#00ffff" stroke-width="1" />
<polyline points="213.5,259.8 352.3,239.8" fill="none" stroke="#00ffff" stroke-width="1" />
<polyline points="213.5,264.8 353.6,245.5" fill="none" stroke="#00ffff" stroke-width="1" />
<polyline points="357.3,148 356.3,170 354.8,225 353.6,245.5" fill="none" stroke="#00ffff" stroke-width="1" />
<polyline points="350.3,224.2 211.5,222.7 209.8,331.4 348.8,332.6 350.3,224.2" fill="none" stroke="#00ffff" stroke-width="1" />
<polyline points="349.8,226.7 213.5,225.7" fill="none" stroke="#00ffff" stroke-width="1" />
<polyline points="210.5,328.6 348.8,329.9" fill="none" stroke="#00ffff" stroke-width="1" />
<polyline points="321.8,224.5 349.8,224.5" fill="none" stroke="#00ffff" stroke-width="1" />
<polyline points="321.8,225.5 349.8,225.5" fill="none" stroke="#00ffff" stroke-width="1" />
<polyline points="321.8,223.5 349.8,223.5" fill="none" stroke="#00ffff" stroke-width="1" />
<polyline points="349.8,224.7 400,224.7 461.5,224.5" fill="none" stroke="#00ffff" stroke-width="1" />
<polyline points="321.8,225 321.8,241 343.6,239.3 388,237.6 459,236.5" fill="none" stroke="#00ffff" stroke-width="1" />
<polyline points="326,242 343.6,242 388,240.5 458,239.5" fill="none" stroke="#00ffff" stroke-width="1" />
<polyline points="324.8,242.3 328,289 336.3,364.5 493.4,365.5 473,280 461.4,224.5" fill="none" stroke="#00ffff" stroke-width="1" />
<polyline points="328.2,242.3 331.8,289 340.1,364.5" fill="none" stroke="#00ffff" stroke-width="1" />
<polyline points="458,223.8 470,280 489.8,365" fill="none" stroke="#00ffff" stroke-width="1" />
<polyline points="418.3,221.2 443.2,127.3 623,147.2 619.8,249.4 617,300 614.6,366.5" fill="none" stroke="#00ffff" stroke-width="1" />
<polyline points="441.5,131 623,151" fill="none" stroke="#00ffff" stroke-width="1" />
<polyline points="619.7,246 416.6,203 415.3,312.3 614.6,366.5" fill="none" stroke="#00ffff" stroke-width="1" />
<polyline points="619.7,249.4 416.6,206.3" fill="none" stroke="#00ffff" stroke-width="1" />
<polyline points="416.5,309.5 613.5,362.8" fill="none" stroke="#00ffff" stroke-width="1" />
<polyline points="418.3,221.2 461.4,229.8 618.4,262.7" fill="none" stroke="#00ffff" stroke-width="1" />
<polyline points="417.5,224.5 461.4,233.2 618.4,266" fill="none" stroke="#00ffff" stroke-width="1" />
<line x1="336.5" y1="180.5" x2="340.5" y2="191.5" stroke="#7c7c7c"/><line x1="340.5" y1="191.5" x2="352.5" y2="184.5" stroke="#7c7c7c"/><line x1="352.5" y1="184.5" x2="357.5" y2="177.5" stroke="#7c7c7c"/><line x1="338.5" y1="184.5" x2="347.5" y2="179.5" stroke="#7c7c7c"/><line x1="341.5" y1="187.5" x2="344.5" y2="180.5" stroke="#7c7c7c"/><line x1="345.5" y1="186.5" x2="349.5" y2="178.5" stroke="#7c7c7c"/><line x1="349.5" y1="184.5" x2="353.5" y2="177.5" stroke="#7c7c7c"/><line x1="338.5" y1="186.5" x2="350.5" y2="181.5" stroke="#7c7c7c"/><line x1="343.5" y1="189.5" x2="355.5" y2="180.5" stroke="#7c7c7c"/>
<line x1="274.2" y1="106.3" x2="374.7" y2="176.2" stroke="#00ff00"/>
<line x1="374.7" y1="176.2" x2="298.1" y2="273.5" stroke="#0000ff"/>
<line x1="374.7" y1="176.2" x2="421.7" y2="282.5" stroke="#ff0000"/>
<polyline points="208.5,46.5 361.5,46.5 357.5,159.5 208.5,164.5" fill="none" stroke="#ffff00" stroke-width="1" /><polyline points="208.5,46.5 361.5,46.5 357.5,159.5 208.5,164.5" fill="none" stroke="#ff00ff" stroke-width="1" stroke-dasharray="4 4"/><polyline points="208.5,46 208.5,165" fill="none" stroke="#ffff00" stroke-width="1" /><polyline points="208.5,46 208.5,165" fill="none" stroke="#ff00ff" stroke-width="1" stroke-dasharray="6 4 4 4 4 4 4 4 4 4 4 4 4 4 4 4 4 4 4 4 4 4 4 4 4 4 4 4 4 4"/>
</g>
</svg>
<div class="t" style="left:480px;top:2px"><span class="z">0</span></div>
<div class="t" style="left:715px;top:2px">1</div>
<div class="t" style="left:528px;top:39px"><span class="z">0</span>.2</div>
<div class="t" style="left:576px;top:39px"><span class="z">0</span>.4</div>
<div class="t" style="left:624px;top:39px"><span class="z">0</span>.6</div>
<div class="t" style="left:672px;top:39px"><span class="z">0</span>.8</div>
<div class="t" style="left:25px;top:394px">5 km</div>
<div class="t" style="left:82.6px;top:409px">MSI:  2<span class="z">0</span><span class="z">0</span><span class="z">0</span>-337T<span class="z">0</span>8:26:33.<span class="z">0</span><span class="z">0</span> to 2<span class="z">0</span><span class="z">0</span><span class="z">0</span>-337T<span class="z">0</span>8:34:51.<span class="z">0</span><span class="z">0</span> (6/<span class="z">0</span>151155827 to 6/<span class="z">0</span>151156325)</div>
<div class="t" style="left:6.6px;top:432px">MidSouthGlobals_337</div>
<div class="t" style="left:6.6px;top:446px">Mosaic 1<span class="z">0</span></div>
<div class="t" style="left:6.6px;top:460px">3x3_3 mosaic in filter 4, clean</div>
</body></html>
